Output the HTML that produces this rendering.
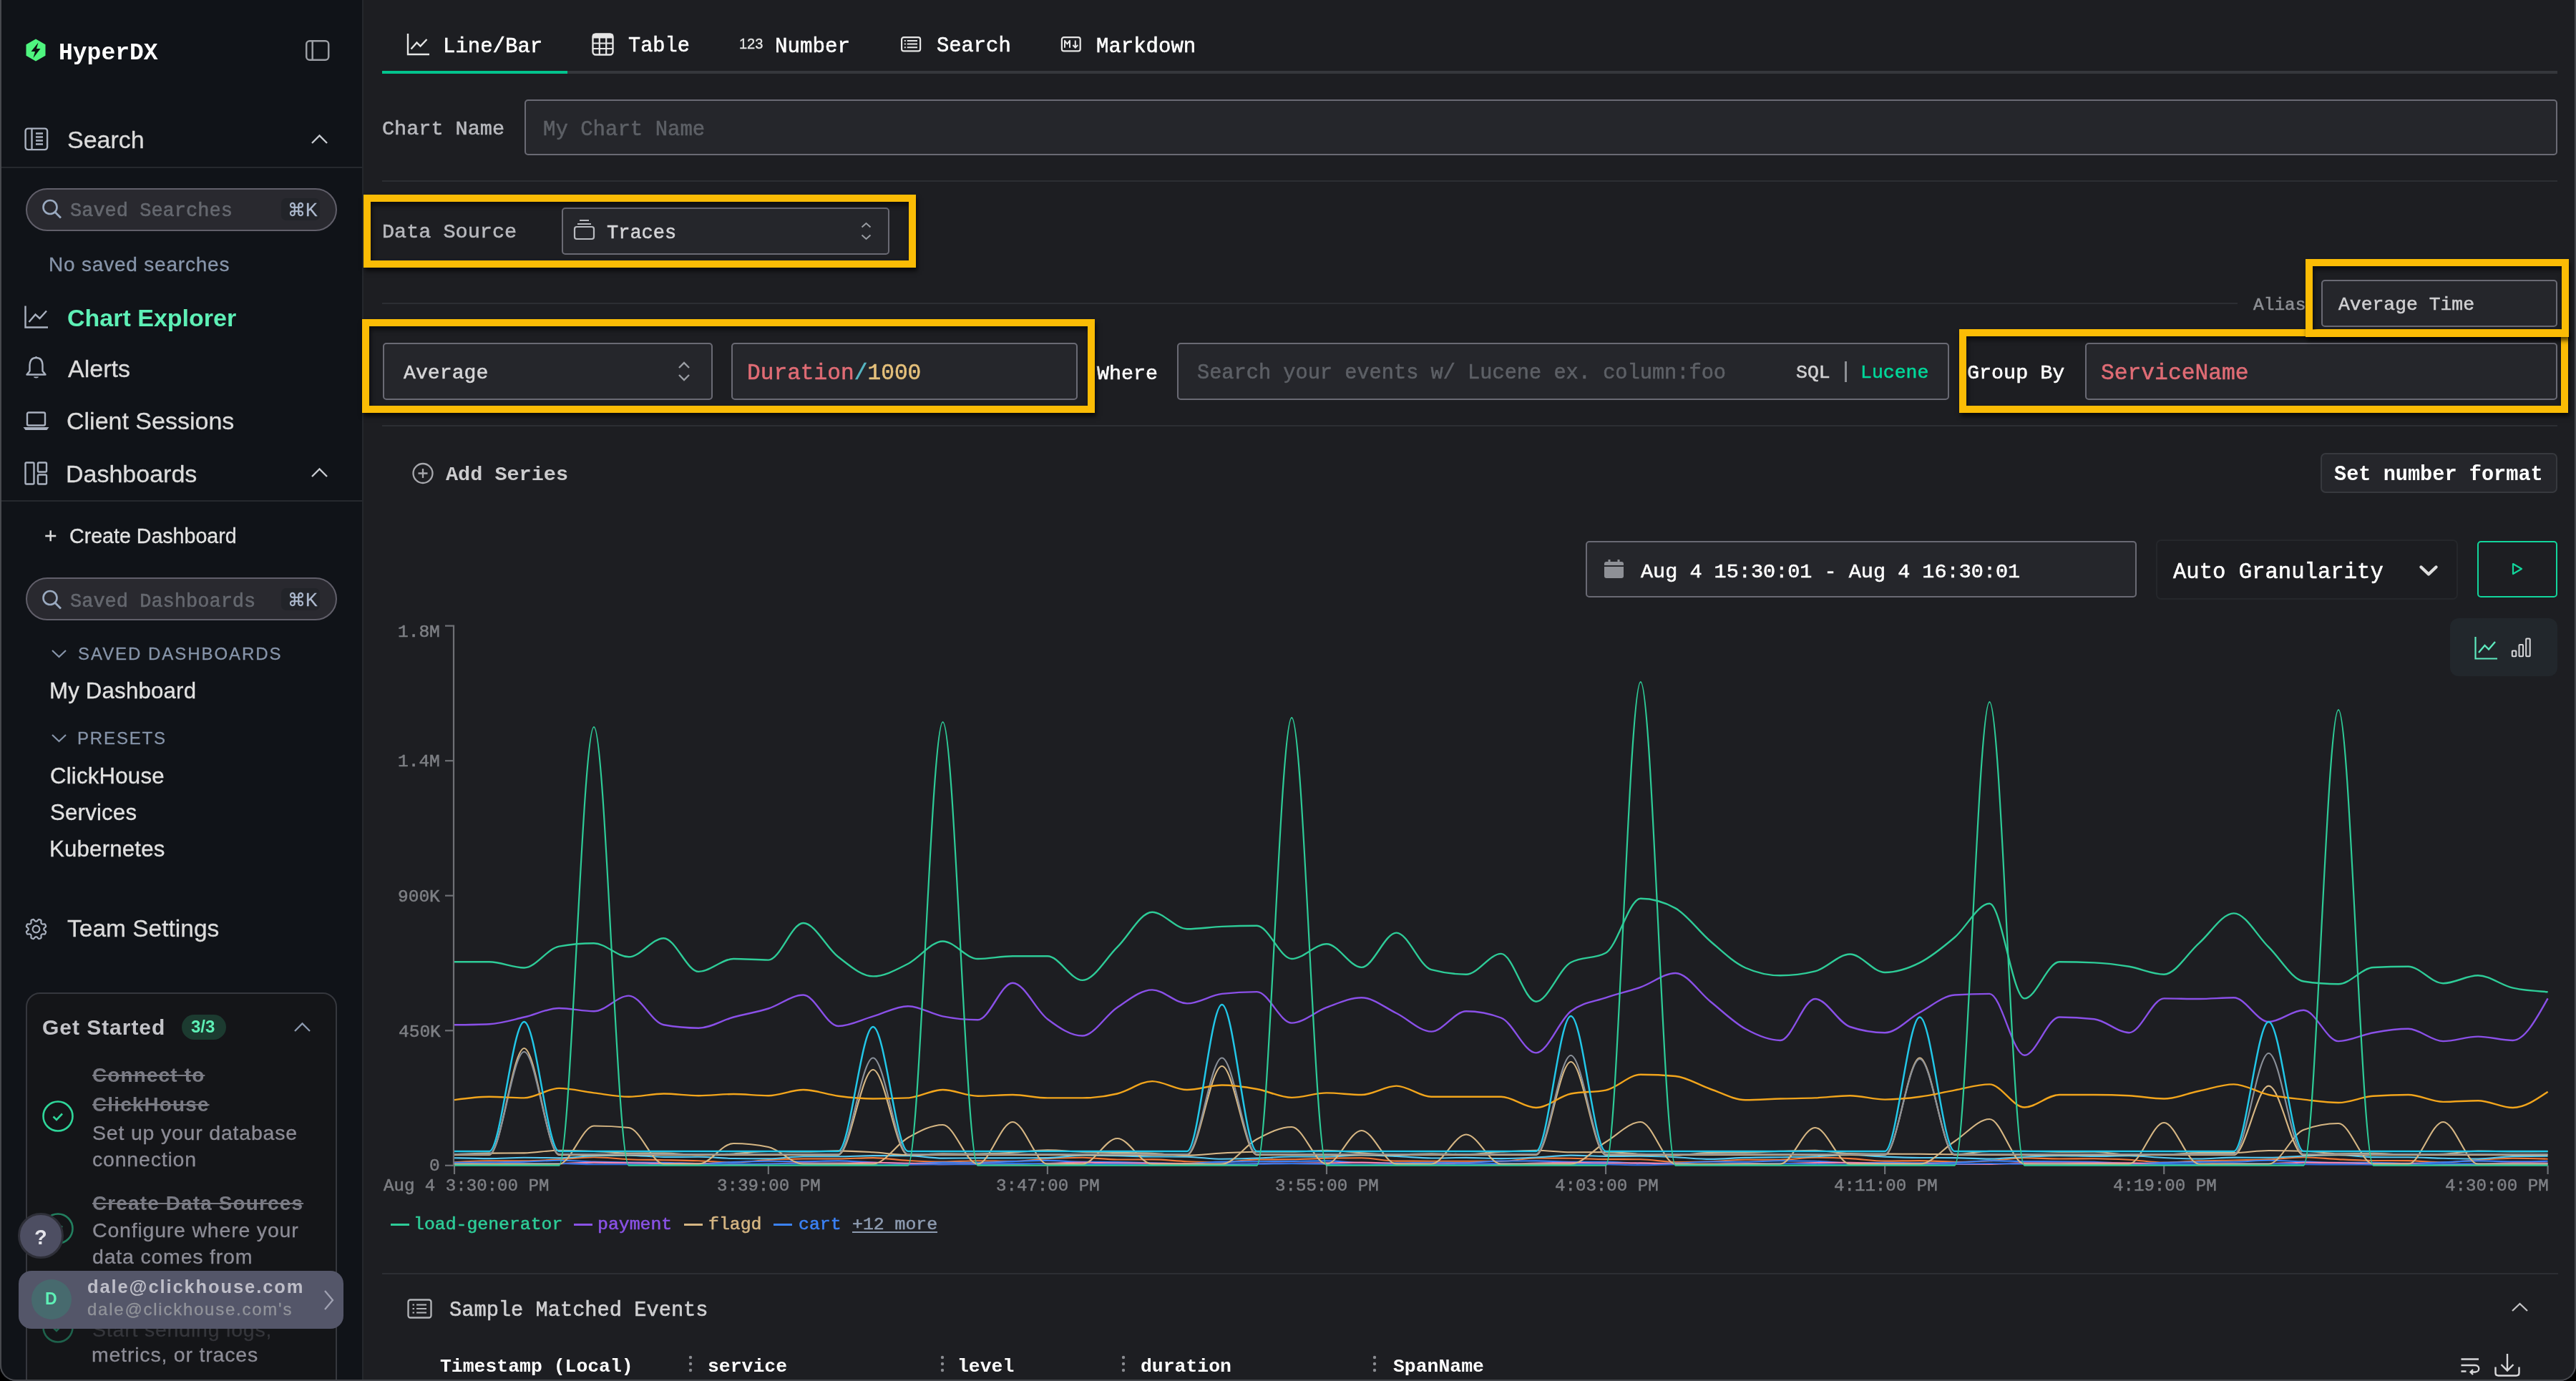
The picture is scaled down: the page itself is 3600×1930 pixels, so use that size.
<!DOCTYPE html><html><head><meta charset="utf-8"><style>
html,body{margin:0;padding:0;background:#000;}
body{width:3600px;height:1930px;position:relative;overflow:hidden;}
.t{position:absolute;white-space:pre;will-change:transform;}
.m{-webkit-text-stroke:0.55px currentColor;}
.s{-webkit-text-stroke:0.3px currentColor;}
.b{position:absolute;box-sizing:border-box;}
#win{position:absolute;left:0;top:0;width:3600px;height:1930px;border-radius:0 0 22px 22px;overflow:hidden;background:#1d1e22;}
</style></head><body><div id="win">
<div class="b" style="left:0px;top:0px;width:507px;height:1930px;background:#101318;"></div>
<div class="b" style="left:506px;top:0px;width:2px;height:1930px;background:#24272c;"></div>
<svg class="b" style="left:34px;top:53px;" width="32" height="34" viewBox="0 0 32 34" fill="none"><path d="M16 1.5 L29.5 9.3 L29.5 24.7 L16 32.5 L2.5 24.7 L2.5 9.3 Z" fill="#4ff57f"/><path d="M19.5 6.5 L9.5 19 L15 19 L12.5 28 L22.5 15 L17 15 Z" fill="#0d1012"/></svg>
<div class="t" style="left:81.8px;top:57.7px;font:700 33px/33px 'Liberation Mono', monospace;color:#ffffff;">HyperDX</div>
<svg class="b" style="left:425px;top:54px;" width="38" height="34" viewBox="0 0 38 34" fill="none"><rect x="3.2" y="3.2" width="31" height="26.5" rx="4.5" stroke="#9b9ea4" stroke-width="2.5"/><line x1="11.7" y1="3.5" x2="11.7" y2="29.5" stroke="#9b9ea4" stroke-width="2.5"/></svg>
<svg class="b" style="left:33px;top:177px;" width="36" height="35" viewBox="0 0 36 35" fill="none"><rect x="2.6" y="2.6" width="30.5" height="29.5" rx="3.5" stroke="#a9b1bf" stroke-width="2.4"/><line x1="11.5" y1="3" x2="11.5" y2="32" stroke="#a9b1bf" stroke-width="2.4"/><path d="M17 9.5h10M17 14.5h10M17 19.5h10M17 24.5h10" stroke="#a9b1bf" stroke-width="2.4"/></svg>
<div class="t s" style="left:94.0px;top:178.2px;font:400 34px/34px 'Liberation Sans', sans-serif;color:#dcdcdc;">Search</div>
<svg class="b" style="left:433px;top:185px;" width="27" height="19" viewBox="0 0 27 19" fill="none"><path d="M3 15 L13.5 4.5 L24 15" stroke="#c9ccd2" stroke-width="2.4"/></svg>
<div class="b" style="left:2px;top:233px;width:504px;height:2px;background:#26292e;"></div>
<div class="b" style="left:36px;top:263px;width:435px;height:60px;background:#29292f;border:2px solid #615f6a;border-radius:30px;"></div>
<svg class="b" style="left:56.5px;top:277px;" width="33.0" height="30" viewBox="0 0 33.0 30" fill="none"><circle cx="13" cy="12.5" r="9.5" stroke="#9aaac0" stroke-width="2.6"/><path d="M20 19.5 L28 27.5" stroke="#9aaac0" stroke-width="2.8"/></svg>
<div class="t m" style="left:98.0px;top:281.8px;font:400 27px/27px 'Liberation Mono', monospace;color:#65686f;">Saved Searches</div>
<div class="b" style="left:393px;top:277px;width:54px;height:31px;background:#222429;border-radius:7px;"></div>
<div class="t s" style="left:402.0px;top:280.8px;font:400 25px/25px 'Liberation Sans', sans-serif;color:#aebbd0;">⌘K</div>
<div class="t s" style="left:68.1px;top:356.3px;font:400 28px/28px 'Liberation Sans', sans-serif;color:#8795aa;letter-spacing:0.8px;">No saved searches</div>
<svg class="b" style="left:32px;top:425px;" width="37" height="36" viewBox="0 0 37 36" fill="none"><path d="M3.5 2.5 V32.5 H35" stroke="#a9b1bf" stroke-width="2.4"/><path d="M8.5 25 L17.5 14.5 L23.5 20 L33 9.5" stroke="#a9b1bf" stroke-width="2.4"/></svg>
<div class="t" style="left:93.8px;top:426.9px;font:700 34px/34px 'Liberation Sans', sans-serif;color:#5ef0b6;">Chart Explorer</div>
<svg class="b" style="left:34px;top:496px;" width="33" height="37" viewBox="0 0 33 37" fill="none"><path d="M16.5 4 C9 4 7.5 10 7.5 15 V22.5 L3.5 27.5 H29.5 L25.5 22.5 V15 C25.5 10 24 4 16.5 4 Z" stroke="#a9b1bf" stroke-width="2.4" stroke-linejoin="round"/><path d="M13 30.5 H20 C20 33 13 33 13 30.5Z" fill="#a9b1bf"/><circle cx="16.5" cy="3.5" r="1.5" fill="#a9b1bf"/></svg>
<div class="t s" style="left:94.9px;top:498.2px;font:400 34px/34px 'Liberation Sans', sans-serif;color:#dcdcdc;">Alerts</div>
<svg class="b" style="left:32px;top:573px;" width="37" height="29" viewBox="0 0 37 29" fill="none"><rect x="6" y="3.5" width="25" height="18" rx="2" stroke="#a9b1bf" stroke-width="2.4"/><path d="M2.5 25 H34.5 L33 27 H4 Z" fill="#a9b1bf" stroke="#a9b1bf" stroke-width="2"/></svg>
<div class="t s" style="left:93.3px;top:571.2px;font:400 34px/34px 'Liberation Sans', sans-serif;color:#dcdcdc;">Client Sessions</div>
<svg class="b" style="left:32px;top:643px;" width="37" height="37" viewBox="0 0 37 37" fill="none"><rect x="3.5" y="3.5" width="12" height="30" rx="1.5" stroke="#a9b1bf" stroke-width="2.4"/><rect x="21" y="3.5" width="12" height="13" rx="1.5" stroke="#a9b1bf" stroke-width="2.4"/><rect x="21" y="20.5" width="12" height="13" rx="1.5" stroke="#a9b1bf" stroke-width="2.4"/></svg>
<div class="t s" style="left:92.2px;top:645.2px;font:400 34px/34px 'Liberation Sans', sans-serif;color:#dcdcdc;">Dashboards</div>
<svg class="b" style="left:433px;top:651px;" width="27" height="19" viewBox="0 0 27 19" fill="none"><path d="M3 15 L13.5 4.5 L24 15" stroke="#c9ccd2" stroke-width="2.4"/></svg>
<div class="b" style="left:2px;top:699px;width:504px;height:2px;background:#26292e;"></div>
<div class="t s" style="left:61.5px;top:734.0px;font:400 30px/30px 'Liberation Sans', sans-serif;color:#dcdcdc;">+</div>
<div class="t s" style="left:97.0px;top:735.2px;font:400 28.6px/28.6px 'Liberation Sans', sans-serif;color:#e2e2e2;">Create Dashboard</div>
<div class="b" style="left:36px;top:807px;width:435px;height:60px;background:#29292f;border:2px solid #615f6a;border-radius:30px;"></div>
<svg class="b" style="left:56.5px;top:822.5px;" width="33.0" height="30.0" viewBox="0 0 33.0 30.0" fill="none"><circle cx="13" cy="12.5" r="9.5" stroke="#9aaac0" stroke-width="2.6"/><path d="M20 19.5 L28 27.5" stroke="#9aaac0" stroke-width="2.8"/></svg>
<div class="t m" style="left:98.0px;top:828.3px;font:400 27px/27px 'Liberation Mono', monospace;color:#65686f;">Saved Dashboards</div>
<div class="b" style="left:393px;top:822px;width:54px;height:31px;background:#222429;border-radius:7px;"></div>
<div class="t s" style="left:402.0px;top:826.3px;font:400 25px/25px 'Liberation Sans', sans-serif;color:#aebbd0;">⌘K</div>
<svg class="b" style="left:70px;top:904px;" width="25" height="18" viewBox="0 0 25 18" fill="none"><path d="M3 5 L12.5 14 L22 5" stroke="#8795aa" stroke-width="2.2"/></svg>
<div class="t s" style="left:108.9px;top:901.7px;font:400 24px/24px 'Liberation Sans', sans-serif;color:#8795aa;letter-spacing:1.95px;">SAVED DASHBOARDS</div>
<div class="t s" style="left:68.8px;top:949.6px;font:400 31.2px/31.2px 'Liberation Sans', sans-serif;color:#e2e2e2;letter-spacing:0.2px;">My Dashboard</div>
<svg class="b" style="left:70px;top:1022px;" width="25" height="18" viewBox="0 0 25 18" fill="none"><path d="M3 5 L12.5 14 L22 5" stroke="#8795aa" stroke-width="2.2"/></svg>
<div class="t s" style="left:108.0px;top:1019.7px;font:400 24px/24px 'Liberation Sans', sans-serif;color:#8795aa;letter-spacing:1.85px;">PRESETS</div>
<div class="t s" style="left:69.8px;top:1068.6px;font:400 31.2px/31.2px 'Liberation Sans', sans-serif;color:#e2e2e2;letter-spacing:0.2px;">ClickHouse</div>
<div class="t s" style="left:70.0px;top:1120.0px;font:400 31.2px/31.2px 'Liberation Sans', sans-serif;color:#e2e2e2;letter-spacing:0.2px;">Services</div>
<div class="t s" style="left:68.8px;top:1171.2px;font:400 31.2px/31.2px 'Liberation Sans', sans-serif;color:#e2e2e2;letter-spacing:0.2px;">Kubernetes</div>
<svg class="b" style="left:33px;top:1281px;" width="35" height="35" viewBox="0 0 35 35" fill="none"><g transform="translate(17.5 17.5) rotate(22.5)" stroke="#a9b1bf" stroke-width="2.2" stroke-linejoin="round"><path d="M0.00 -14.20L0.56 -14.19L1.11 -14.16L1.67 -14.10L2.12 -13.39L2.46 -12.35L2.75 -11.47L3.05 -10.81L3.38 -10.39L3.74 -10.15L4.13 -9.98L4.53 -9.82L4.96 -9.74L5.49 -9.80L6.16 -10.06L7.00 -10.47L7.97 -10.97L8.79 -11.15L9.22 -10.80L9.64 -10.43L10.04 -10.04L10.43 -9.64L10.80 -9.22L11.15 -8.79L10.97 -7.97L10.47 -7.00L10.06 -6.16L9.80 -5.49L9.74 -4.96L9.82 -4.53L9.98 -4.13L10.15 -3.74L10.39 -3.38L10.81 -3.05L11.47 -2.75L12.35 -2.46L13.39 -2.12L14.10 -1.67L14.16 -1.11L14.19 -0.56L14.20 0.00L14.19 0.56L14.16 1.11L14.10 1.67L13.39 2.12L12.35 2.46L11.47 2.75L10.81 3.05L10.39 3.38L10.15 3.74L9.98 4.13L9.82 4.53L9.74 4.96L9.80 5.49L10.06 6.16L10.47 7.00L10.97 7.97L11.15 8.79L10.80 9.22L10.43 9.64L10.04 10.04L9.64 10.43L9.22 10.80L8.79 11.15L7.97 10.97L7.00 10.47L6.16 10.06L5.49 9.80L4.96 9.74L4.53 9.82L4.13 9.98L3.74 10.15L3.38 10.39L3.05 10.81L2.75 11.47L2.46 12.35L2.12 13.39L1.67 14.10L1.11 14.16L0.56 14.19L0.00 14.20L-0.56 14.19L-1.11 14.16L-1.67 14.10L-2.12 13.39L-2.46 12.35L-2.75 11.47L-3.05 10.81L-3.38 10.39L-3.74 10.15L-4.13 9.98L-4.53 9.82L-4.96 9.74L-5.49 9.80L-6.16 10.06L-7.00 10.47L-7.97 10.97L-8.79 11.15L-9.22 10.80L-9.64 10.43L-10.04 10.04L-10.43 9.64L-10.80 9.22L-11.15 8.79L-10.97 7.97L-10.47 7.00L-10.06 6.16L-9.80 5.49L-9.74 4.96L-9.82 4.53L-9.98 4.13L-10.15 3.74L-10.39 3.38L-10.81 3.05L-11.47 2.75L-12.35 2.46L-13.39 2.12L-14.10 1.67L-14.16 1.11L-14.19 0.56L-14.20 0.00L-14.19 -0.56L-14.16 -1.11L-14.10 -1.67L-13.39 -2.12L-12.35 -2.46L-11.47 -2.75L-10.81 -3.05L-10.39 -3.38L-10.15 -3.74L-9.98 -4.13L-9.82 -4.53L-9.74 -4.96L-9.80 -5.49L-10.06 -6.16L-10.47 -7.00L-10.97 -7.97L-11.15 -8.79L-10.80 -9.22L-10.43 -9.64L-10.04 -10.04L-9.64 -10.43L-9.22 -10.80L-8.79 -11.15L-7.97 -10.97L-7.00 -10.47L-6.16 -10.06L-5.49 -9.80L-4.96 -9.74L-4.53 -9.82L-4.13 -9.98L-3.74 -10.15L-3.38 -10.39L-3.05 -10.81L-2.75 -11.47L-2.46 -12.35L-2.12 -13.39L-1.67 -14.10L-1.11 -14.16L-0.56 -14.19L-0.00 -14.20Z"/><circle r="4.8"/></g></svg>
<div class="t s" style="left:94.2px;top:1281.2px;font:400 33.5px/33.5px 'Liberation Sans', sans-serif;color:#dcdcdc;">Team Settings</div>
<div class="b" style="left:36px;top:1387px;width:435px;height:603px;background:#141518;border:2px solid #35373d;border-radius:20px;"></div>
<div class="t" style="left:58.8px;top:1421.3px;font:700 30px/30px 'Liberation Sans', sans-serif;color:#c3c3c8;letter-spacing:0.96px;">Get Started</div>
<div class="b" style="left:254px;top:1418px;width:62px;height:35px;background:#1c3b30;border-radius:18px;"></div>
<div class="t" style="left:267.4px;top:1422.7px;font:700 24px/24px 'Liberation Sans', sans-serif;color:#5ef0b6;">3/3</div>
<svg class="b" style="left:409px;top:1425.5px;" width="27" height="20.0" viewBox="0 0 27 20.0" fill="none"><path d="M3 15 L13.5 4.5 L24 15" stroke="#8d9bb0" stroke-width="2.3"/></svg>
<svg class="b" style="left:57px;top:1536px;" width="48" height="48" viewBox="0 0 48 48" fill="none"><g opacity="1"><circle cx="24" cy="24" r="20.5" stroke="#2fd69a" stroke-width="2.6"/><path d="M17.5 24.5 L22 29 L30 20.5" stroke="#2fd69a" stroke-width="2.6"/></g></svg>
<div class="t" style="left:128.9px;top:1489.1px;font:700 27.9px/27.9px 'Liberation Sans', sans-serif;color:#7a7b84;letter-spacing:1.17px;text-decoration:line-through;">Connect to</div>
<div class="t" style="left:128.9px;top:1530.4px;font:700 27.9px/27.9px 'Liberation Sans', sans-serif;color:#7a7b84;letter-spacing:1.17px;text-decoration:line-through;">ClickHouse</div>
<div class="t s" style="left:128.7px;top:1568.9px;font:400 28.5px/28.5px 'Liberation Sans', sans-serif;color:#8c8c96;letter-spacing:0.8px;">Set up your database</div>
<div class="t s" style="left:128.8px;top:1605.9px;font:400 28.5px/28.5px 'Liberation Sans', sans-serif;color:#8c8c96;letter-spacing:0.8px;">connection</div>
<svg class="b" style="left:57px;top:1693px;" width="48" height="48" viewBox="0 0 48 48" fill="none"><g opacity="0.55"><circle cx="24" cy="24" r="20.5" stroke="#2fd69a" stroke-width="2.6"/><path d="M17.5 24.5 L22 29 L30 20.5" stroke="#2fd69a" stroke-width="2.6"/></g></svg>
<div class="t" style="left:128.9px;top:1668.4px;font:700 27.9px/27.9px 'Liberation Sans', sans-serif;color:#7a7b84;letter-spacing:1.17px;text-decoration:line-through;">Create Data Sources</div>
<div class="t s" style="left:128.6px;top:1704.9px;font:400 28.5px/28.5px 'Liberation Sans', sans-serif;color:#8c8c96;letter-spacing:0.8px;">Configure where your</div>
<div class="t s" style="left:128.8px;top:1742.4px;font:400 28.5px/28.5px 'Liberation Sans', sans-serif;color:#8c8c96;letter-spacing:0.8px;">data comes from</div>
<svg class="b" style="left:57px;top:1831px;" width="48" height="48" viewBox="0 0 48 48" fill="none"><g opacity="0.4"><circle cx="24" cy="24" r="20.5" stroke="#2fd69a" stroke-width="2.6"/><path d="M17.5 24.5 L22 29 L30 20.5" stroke="#2fd69a" stroke-width="2.6"/></g></svg>
<div class="t s" style="left:128.7px;top:1843.9px;font:400 28.5px/28.5px 'Liberation Sans', sans-serif;color:#35363b;letter-spacing:0.8px;">Start sending logs,</div>
<div class="t s" style="left:128.1px;top:1878.6px;font:400 28.5px/28.5px 'Liberation Sans', sans-serif;color:#8c8c96;letter-spacing:0.8px;">metrics, or traces</div>
<div class="b" style="left:25px;top:1695px;width:64px;height:64px;background:#4d4e62;border:3px solid #2e2f38;border-radius:50%;"></div>
<div class="t" style="left:47.7px;top:1715.4px;font:700 29px/29px 'Liberation Sans', sans-serif;color:#e4e4ea;">?</div>
<div class="b" style="left:26px;top:1776px;width:454px;height:81px;background:#545669;border-radius:18px;"></div>
<div class="b" style="left:44px;top:1788px;width:56px;height:56px;background:#476a6e;border-radius:50%;"></div>
<div class="t" style="left:63.0px;top:1804.0px;font:700 23px/23px 'Liberation Sans', sans-serif;color:#5ef0b6;">D</div>
<div class="t" style="left:122.0px;top:1786.4px;font:700 25.5px/25.5px 'Liberation Sans', sans-serif;color:#bebec8;letter-spacing:1.9px;">dale@clickhouse.com</div>
<div class="t s" style="left:122.0px;top:1818.4px;font:400 24px/24px 'Liberation Sans', sans-serif;color:#91939a;letter-spacing:1.75px;">dale@clickhouse.com&#x27;s</div>
<svg class="b" style="left:448px;top:1800px;" width="24" height="34" viewBox="0 0 24 34" fill="none"><path d="M6 4 L17 17 L6 30" stroke="#a0a2b2" stroke-width="2.3"/></svg>
<svg class="b" style="left:567px;top:45px;" width="34" height="34" viewBox="0 0 34 34" fill="none"><path d="M3 2 V31 H33" stroke="#e6e6e6" stroke-width="2.4"/><path d="M7.5 23.5 L15.5 14.5 L20.5 19.5 L29.5 10" stroke="#e6e6e6" stroke-width="2.4"/></svg>
<div class="t m" style="left:619.2px;top:50.9px;font:400 29px/29px 'Liberation Mono', monospace;color:#ffffff;">Line/Bar</div>
<svg class="b" style="left:826px;top:45px;" width="33" height="34" viewBox="0 0 33 34" fill="none"><rect x="2.5" y="2.5" width="28" height="29" rx="4" stroke="#e6e6e6" stroke-width="2.4"/><rect x="2.5" y="2.5" width="28" height="6" fill="#e6e6e6"/><path d="M2.5 15.5 H30.5 M2.5 23 H30.5 M11.8 8 V31 M21.2 8 V31" stroke="#e6e6e6" stroke-width="2.2"/></svg>
<div class="t m" style="left:877.7px;top:51.2px;font:400 28.6px/28.6px 'Liberation Mono', monospace;color:#ffffff;">Table</div>
<div class="t s" style="left:1032.5px;top:51.1px;font:400 20px/20px 'Liberation Sans', sans-serif;color:#e6e6e6;">123</div>
<div class="t m" style="left:1083.1px;top:50.7px;font:400 29.2px/29.2px 'Liberation Mono', monospace;color:#ffffff;">Number</div>
<svg class="b" style="left:1256px;top:47px;" width="34" height="30" viewBox="0 0 34 30" fill="none"><rect x="4.1" y="5.1" width="26" height="19.3" rx="3" stroke="#e6e6e6" stroke-width="2.2"/><path d="M7.8 9.9h2M11.7 9.9h14.3M7.8 14.6h2M11.7 14.6h14.3M7.8 19.2h2M11.7 19.2h14.3" stroke="#e6e6e6" stroke-width="2"/></svg>
<div class="t m" style="left:1308.9px;top:51.0px;font:400 28.8px/28.8px 'Liberation Mono', monospace;color:#ffffff;">Search</div>
<svg class="b" style="left:1480px;top:47px;" width="34" height="30" viewBox="0 0 34 30" fill="none"><rect x="3.9" y="5.1" width="25.8" height="19.3" rx="3" stroke="#e6e6e6" stroke-width="2.2"/><path d="M8 19.7 V9.8 L11.5 14.5 L15 9.8 V19.7" stroke="#e6e6e6" stroke-width="2" stroke-linejoin="round"/><path d="M22.8 9.5 V19.5 M19.3 16 L22.8 19.5 L26.3 16" stroke="#e6e6e6" stroke-width="2"/></svg>
<div class="t m" style="left:1531.7px;top:50.9px;font:400 29px/29px 'Liberation Mono', monospace;color:#ffffff;">Markdown</div>
<div class="b" style="left:534px;top:99px;width:3040px;height:4px;background:#35373c;"></div>
<div class="b" style="left:534px;top:99px;width:259px;height:4px;background:#03c48e;"></div>
<div class="t m" style="left:534.4px;top:167.2px;font:400 28.5px/28.5px 'Liberation Mono', monospace;color:#b8b9be;">Chart Name</div>
<div class="b" style="left:733px;top:139px;width:2841px;height:78px;background:#25262b;border:2px solid #6a6a74;border-radius:5px;"></div>
<div class="t m" style="left:759.2px;top:166.8px;font:400 29px/29px 'Liberation Mono', monospace;color:#5d6066;">My Chart Name</div>
<div class="b" style="left:534px;top:252px;width:3040px;height:2px;background:#2c2e33;"></div>
<div class="t m" style="left:534.2px;top:311.4px;font:400 28.5px/28.5px 'Liberation Mono', monospace;color:#b8b9be;">Data Source</div>
<div class="b" style="left:785px;top:290px;width:458px;height:66px;background:#25262b;border:2px solid #6a6a74;border-radius:5px;"></div>
<svg class="b" style="left:799px;top:303px;" width="34" height="37" viewBox="0 0 34 37" fill="none"><path d="M11 5 H24 M8 10 H27" stroke="#b9bbc0" stroke-width="2"/><rect x="4" y="14" width="27" height="17" rx="3" stroke="#b9bbc0" stroke-width="2.2"/></svg>
<div class="t m" style="left:848.0px;top:312.8px;font:400 27px/27px 'Liberation Mono', monospace;color:#d4d4d7;">Traces</div>
<svg class="b" style="left:1198px;top:308px;" width="26" height="32" viewBox="0 0 26 32" fill="none"><path d="M6.5 9.5 L12.5 4 L18.5 9.5 M6.5 20.5 L12.5 26 L18.5 20.5" stroke="#9a9da3" stroke-width="2"/></svg>
<div class="b" style="left:534px;top:423px;width:2593px;height:2px;background:#2c2e33;"></div>
<div class="t m" style="left:3149.4px;top:414.7px;font:400 24.5px/24.5px 'Liberation Mono', monospace;color:#8d8f94;">Alias</div>
<div class="b" style="left:3244px;top:391px;width:330px;height:66px;background:#25262b;border:2px solid #6a6a74;border-radius:5px;"></div>
<div class="t m" style="left:3268.0px;top:413.3px;font:400 26.4px/26.4px 'Liberation Mono', monospace;color:#cfcfd1;">Average Time</div>
<div class="b" style="left:535px;top:479px;width:461px;height:80px;background:#25262b;border:2px solid #6a6a74;border-radius:5px;"></div>
<div class="t m" style="left:564.0px;top:508.4px;font:400 28.2px/28.2px 'Liberation Mono', monospace;color:#d6d6d8;">Average</div>
<svg class="b" style="left:940px;top:500px;" width="32" height="38" viewBox="0 0 32 38" fill="none"><path d="M9 14 L16 7 L23 14 M9 24 L16 31 L23 24" stroke="#9a9da3" stroke-width="2.4"/></svg>
<div class="b" style="left:1022px;top:479px;width:484px;height:80px;background:#25262b;border:2px solid #6a6a74;border-radius:5px;"></div>
<div class="t m" style="left:1043.5px;top:506.1px;font:400 31.2px/31.2px 'Liberation Mono', monospace;color:#e06c75;">Duration<span style="color:#56b6c2">/</span><span style="color:#e5c07b">1000</span></div>
<div class="t m" style="left:1532.8px;top:508.3px;font:400 28.3px/28.3px 'Liberation Mono', monospace;color:#ffffff;">Where</div>
<div class="b" style="left:1645px;top:479px;width:1079px;height:80px;background:#25262b;border:2px solid #6a6a74;border-radius:5px;"></div>
<div class="t m" style="left:1672.5px;top:508.1px;font:400 28.65px/28.65px 'Liberation Mono', monospace;color:#5d6066;">Search your events w/ Lucene ex. column:foo</div>
<div class="t m" style="left:2510.0px;top:508.2px;font:400 26.5px/26.5px 'Liberation Mono', monospace;color:#d0d0d2;">SQL</div>
<div class="b" style="left:2578px;top:505px;width:2.5px;height:29px;background:#8d8f94;"></div>
<div class="t m" style="left:2599.7px;top:508.2px;font:400 26.5px/26.5px 'Liberation Mono', monospace;color:#00d89a;">Lucene</div>
<div class="t m" style="left:2749.1px;top:508.2px;font:400 28.4px/28.4px 'Liberation Mono', monospace;color:#ffffff;">Group By</div>
<div class="b" style="left:2914px;top:479px;width:660px;height:80px;background:#25262b;border:2px solid #6a6a74;border-radius:5px;"></div>
<div class="t m" style="left:2936.4px;top:506.0px;font:400 31.3px/31.3px 'Liberation Mono', monospace;color:#e06c75;">ServiceName</div>
<div class="b" style="left:534px;top:594px;width:3040px;height:2px;background:#2c2e33;"></div>
<svg class="b" style="left:574px;top:645px;" width="34" height="33" viewBox="0 0 34 33" fill="none"><circle cx="17" cy="16.5" r="13.5" stroke="#a7a8ad" stroke-width="2.3"/><path d="M17 10 V23 M10.5 16.5 H23.5" stroke="#a7a8ad" stroke-width="2.3"/></svg>
<div class="t" style="left:622.5px;top:649.7px;font:700 28.5px/28.5px 'Liberation Mono', monospace;color:#cbcbcd;">Add Series</div>
<div class="b" style="left:3243px;top:633px;width:331px;height:56px;background:#25262b;border:2px solid #37393e;border-radius:7px;"></div>
<div class="t" style="left:3262.2px;top:649.6px;font:700 28.6px/28.6px 'Liberation Mono', monospace;color:#ffffff;">Set number format</div>
<div class="b" style="left:2216px;top:756px;width:770px;height:79px;background:#25262b;border:2px solid #6a6a74;border-radius:5px;"></div>
<svg class="b" style="left:2238px;top:779px;" width="35" height="32" viewBox="0 0 35 32" fill="none"><rect x="4" y="6" width="27" height="23" rx="3" fill="#8e9096"/><path d="M11 3 V8 M24 3 V8" stroke="#8e9096" stroke-width="3"/><rect x="4" y="11" width="27" height="2" fill="#25262b"/></svg>
<div class="t m" style="left:2293.0px;top:786.2px;font:400 28.5px/28.5px 'Liberation Mono', monospace;color:#ffffff;">Aug 4 15:30:01 - Aug 4 16:30:01</div>
<div class="b" style="left:3013px;top:754px;width:422px;height:84px;background:#1c1d21;border:2px solid #25272b;border-radius:7px;"></div>
<div class="t m" style="left:3037.0px;top:784.6px;font:400 30.6px/30.6px 'Liberation Mono', monospace;color:#ffffff;">Auto Granularity</div>
<svg class="b" style="left:3376px;top:784px;" width="36" height="28" viewBox="0 0 36 28" fill="none"><path d="M7.5 8.5 L18 18.5 L28.5 8.5" stroke="#dedede" stroke-width="4.4" stroke-linecap="round" stroke-linejoin="round"/></svg>
<div class="b" style="left:3462px;top:756px;width:112px;height:79px;border:2.5px solid #12d69c;border-radius:5px;"></div>
<svg class="b" style="left:3504px;top:780px;" width="30" height="32" viewBox="0 0 30 32" fill="none"><path d="M8 8 L20 15 L8 22 Z" stroke="#12d69c" stroke-width="2.2" stroke-linejoin="round"/></svg>
<div class="b" style="left:3424px;top:864px;width:150px;height:81px;background:#22272c;border-radius:12px;"></div>
<svg class="b" style="left:3456px;top:888px;" width="38" height="36" viewBox="0 0 38 36" fill="none"><path d="M3.5 2 V32.5 H34" stroke="#5eeabf" stroke-width="2.2"/><path d="M8 24 L16.5 14 L22 19.5 L31 9" stroke="#5eeabf" stroke-width="2.4"/></svg>
<svg class="b" style="left:3505px;top:889px;" width="36" height="33" viewBox="0 0 36 33" fill="none"><rect x="5.8" y="20.5" width="5.5" height="7.8" rx="1" stroke="#d8d8da" stroke-width="2"/><rect x="15.5" y="12" width="5.5" height="16.3" rx="1" stroke="#d8d8da" stroke-width="2"/><rect x="25.2" y="3.5" width="5.5" height="24.8" rx="1" stroke="#d8d8da" stroke-width="2"/></svg>
<svg class="b" style="left:0;top:0" width="3600" height="1930" viewBox="0 0 3600 1930"><path d="M634.0,1628.7 V874.6 H622" stroke="#6e7075" stroke-width="2.2" fill="none"/><path d="M622,1063.2 H634.0" stroke="#6e7075" stroke-width="2.2"/><path d="M622,1251.7 H634.0" stroke="#6e7075" stroke-width="2.2"/><path d="M622,1440.3 H634.0" stroke="#6e7075" stroke-width="2.2"/><path d="M622,1628.8 H634.0" stroke="#6e7075" stroke-width="2.2"/><path d="M635.0,1628.7 V1641" stroke="#6e7075" stroke-width="2.2"/><path d="M1073.84,1628.7 V1641" stroke="#6e7075" stroke-width="2.2"/><path d="M1463.92,1628.7 V1641" stroke="#6e7075" stroke-width="2.2"/><path d="M1854.0,1628.7 V1641" stroke="#6e7075" stroke-width="2.2"/><path d="M2244.08,1628.7 V1641" stroke="#6e7075" stroke-width="2.2"/><path d="M2634.16,1628.7 V1641" stroke="#6e7075" stroke-width="2.2"/><path d="M3024.24,1628.7 V1641" stroke="#6e7075" stroke-width="2.2"/><path d="M3560.6,1628.7 V1641" stroke="#6e7075" stroke-width="2.2"/><path d="M635.0,1624.2C651.3,1623.2 667.5,1622.2 683.8,1622.2C700.0,1622.2 716.3,1622.2 732.5,1622.2C748.8,1622.2 765.0,1621.1 781.3,1620.3C797.5,1619.5 813.8,1617.3 830.0,1617.3C846.3,1617.3 862.5,1619.6 878.8,1620.2C895.1,1620.9 911.3,1620.8 927.6,1621.2C943.8,1621.5 960.1,1621.7 976.3,1622.3C992.6,1622.8 1008.8,1624.6 1025.1,1624.6C1041.3,1624.6 1057.6,1621.8 1073.8,1621.0C1090.1,1620.1 1106.3,1619.5 1122.6,1619.5C1138.9,1619.5 1155.1,1619.5 1171.4,1619.5C1187.6,1619.5 1203.9,1618.1 1220.1,1618.1C1236.4,1618.1 1252.6,1621.0 1268.9,1621.9C1285.1,1622.8 1301.4,1623.6 1317.6,1623.6C1333.9,1623.6 1350.1,1622.2 1366.4,1622.2C1382.7,1622.2 1398.9,1622.9 1415.2,1622.9C1431.4,1622.9 1447.7,1620.1 1463.9,1619.3C1480.2,1618.4 1496.4,1617.8 1512.7,1617.8C1528.9,1617.8 1545.2,1620.5 1561.4,1620.5C1577.7,1620.5 1593.9,1620.4 1610.2,1620.4C1626.5,1620.4 1642.7,1622.6 1659.0,1623.2C1675.2,1623.8 1691.5,1624.2 1707.7,1624.2C1724.0,1624.2 1740.2,1620.6 1756.5,1620.5C1772.7,1620.4 1789.0,1620.4 1805.2,1620.3C1821.5,1620.2 1837.7,1619.1 1854.0,1618.7C1870.3,1618.4 1886.5,1618.3 1902.8,1618.3C1919.0,1618.3 1935.3,1622.6 1951.5,1622.6C1967.8,1622.7 1984.0,1622.6 2000.3,1622.7C2016.5,1622.7 2032.8,1622.8 2049.0,1622.8C2065.3,1622.8 2081.5,1622.9 2097.8,1622.9C2114.1,1622.9 2130.3,1618.5 2146.6,1618.5C2162.8,1618.5 2179.1,1618.6 2195.3,1618.8C2211.6,1619.0 2227.8,1620.0 2244.1,1620.1C2260.3,1620.2 2276.6,1620.1 2292.8,1620.2C2309.1,1620.3 2325.3,1624.1 2341.6,1624.1C2357.9,1624.1 2374.1,1623.9 2390.4,1623.3C2406.6,1622.8 2422.9,1620.7 2439.1,1620.7C2455.4,1620.7 2471.6,1620.7 2487.9,1620.7C2504.1,1620.7 2520.4,1617.8 2536.6,1617.8C2552.9,1617.8 2569.1,1618.3 2585.4,1619.1C2601.7,1619.9 2617.9,1622.6 2634.2,1622.6C2650.4,1622.6 2666.7,1622.1 2682.9,1622.1C2699.2,1622.1 2715.4,1623.7 2731.7,1623.7C2747.9,1623.7 2764.2,1623.1 2780.4,1622.2C2796.7,1621.3 2812.9,1618.3 2829.2,1618.3C2845.5,1618.3 2861.7,1619.5 2878.0,1619.5C2894.2,1619.5 2910.5,1619.2 2926.7,1619.2C2943.0,1619.2 2959.2,1619.9 2975.5,1620.7C2991.7,1621.6 3008.0,1624.5 3024.2,1624.5C3040.5,1624.5 3056.7,1622.9 3073.0,1622.4C3089.3,1621.9 3105.5,1621.8 3121.8,1621.5C3138.0,1621.1 3154.3,1621.1 3170.5,1620.4C3186.8,1619.7 3203.0,1617.3 3219.3,1617.3C3235.5,1617.3 3251.8,1619.3 3268.0,1620.1C3284.3,1620.9 3300.5,1621.8 3316.8,1622.0C3333.1,1622.1 3349.3,1622.0 3365.6,1622.1C3381.8,1622.2 3398.1,1624.4 3414.3,1624.4C3430.6,1624.4 3446.8,1622.1 3463.1,1621.1C3479.3,1620.2 3495.6,1618.8 3511.8,1618.8C3528.1,1618.8 3544.3,1619.2 3560.6,1619.7" stroke="#f07a3a" stroke-width="2.1" fill="none"/><path d="M635.0,1624.8C651.3,1624.7 667.5,1624.6 683.8,1624.4C700.0,1624.2 716.3,1624.1 732.5,1623.6C748.8,1623.2 765.0,1621.8 781.3,1621.8C797.5,1621.8 813.8,1623.0 830.0,1623.5C846.3,1624.0 862.5,1624.3 878.8,1624.5C895.1,1624.6 911.3,1624.6 927.6,1624.7C943.8,1624.8 960.1,1626.1 976.3,1626.1C992.6,1626.1 1008.8,1624.6 1025.1,1624.0C1041.3,1623.5 1057.6,1622.7 1073.8,1622.7C1090.1,1622.7 1106.3,1623.2 1122.6,1623.2C1138.9,1623.2 1155.1,1622.4 1171.4,1622.4C1187.6,1622.4 1203.9,1623.9 1220.1,1624.5C1236.4,1625.0 1252.6,1625.8 1268.9,1625.8C1285.1,1625.8 1301.4,1624.6 1317.6,1624.6C1333.9,1624.6 1350.1,1624.8 1366.4,1624.8C1382.7,1624.8 1398.9,1623.6 1415.2,1623.1C1431.4,1622.6 1447.7,1621.9 1463.9,1621.9C1480.2,1621.9 1496.4,1623.7 1512.7,1623.8C1528.9,1623.9 1545.2,1623.9 1561.4,1624.0C1577.7,1624.0 1593.9,1624.8 1610.2,1625.2C1626.5,1625.5 1642.7,1626.0 1659.0,1626.0C1675.2,1626.0 1691.5,1623.8 1707.7,1623.6C1724.0,1623.4 1740.2,1623.4 1756.5,1623.3C1772.7,1623.2 1789.0,1623.0 1805.2,1622.9C1821.5,1622.7 1837.7,1622.4 1854.0,1622.4C1870.3,1622.4 1886.5,1624.8 1902.8,1625.0C1919.0,1625.2 1935.3,1625.3 1951.5,1625.3C1967.8,1625.3 1984.0,1624.8 2000.3,1624.8C2016.5,1624.8 2032.8,1625.0 2049.0,1625.0C2065.3,1625.0 2081.5,1622.5 2097.8,1622.5C2114.1,1622.5 2130.3,1622.4 2146.6,1622.4C2162.8,1622.4 2179.1,1623.7 2195.3,1623.7C2211.6,1623.7 2227.8,1623.7 2244.1,1623.7C2260.3,1623.7 2276.6,1625.8 2292.8,1625.8C2309.1,1625.8 2325.3,1625.7 2341.6,1625.5C2357.9,1625.4 2374.1,1623.5 2390.4,1623.5C2406.6,1623.5 2422.9,1623.7 2439.1,1623.7C2455.4,1623.7 2471.6,1622.3 2487.9,1622.3C2504.1,1622.3 2520.4,1622.4 2536.6,1622.8C2552.9,1623.1 2569.1,1625.2 2585.4,1625.2C2601.7,1625.2 2617.9,1624.8 2634.2,1624.8C2650.4,1624.8 2666.7,1625.3 2682.9,1625.3C2699.2,1625.3 2715.4,1625.1 2731.7,1624.7C2747.9,1624.3 2764.2,1622.2 2780.4,1622.2C2796.7,1622.2 2812.9,1622.8 2829.2,1623.0C2845.5,1623.2 2861.7,1623.1 2878.0,1623.3C2894.2,1623.4 2910.5,1623.5 2926.7,1623.8C2943.0,1624.2 2959.2,1626.1 2975.5,1626.1C2991.7,1626.1 3008.0,1625.3 3024.2,1624.9C3040.5,1624.6 3056.7,1624.1 3073.0,1623.9C3089.3,1623.7 3105.5,1623.8 3121.8,1623.7C3138.0,1623.5 3154.3,1621.8 3170.5,1621.8C3186.8,1621.8 3203.0,1622.9 3219.3,1623.4C3235.5,1623.9 3251.8,1624.9 3268.0,1624.9C3284.3,1624.9 3300.5,1624.7 3316.8,1624.7C3333.1,1624.7 3349.3,1625.8 3365.6,1625.8C3381.8,1625.8 3398.1,1624.7 3414.3,1624.2C3430.6,1623.6 3446.8,1622.4 3463.1,1622.4C3479.3,1622.4 3495.6,1623.3 3511.8,1623.3C3528.1,1623.3 3544.3,1623.0 3560.6,1622.8" stroke="#3b82f6" stroke-width="2.1" fill="none"/><path d="M635.0,1618.2C651.3,1618.6 667.5,1619.1 683.8,1619.1C700.0,1619.1 716.3,1617.8 732.5,1617.8C748.8,1617.8 765.0,1618.2 781.3,1618.2C797.5,1618.2 813.8,1615.7 830.0,1615.3C846.3,1614.8 862.5,1614.6 878.8,1614.6C895.1,1614.6 911.3,1616.9 927.6,1616.9C943.8,1616.9 960.1,1616.8 976.3,1616.8C992.6,1616.8 1008.8,1618.8 1025.1,1619.0C1041.3,1619.2 1057.6,1619.3 1073.8,1619.3C1090.1,1619.3 1106.3,1616.2 1122.6,1616.2C1138.9,1616.2 1155.1,1616.3 1171.4,1616.3C1187.6,1616.3 1203.9,1615.1 1220.1,1615.1C1236.4,1615.1 1252.6,1615.1 1268.9,1615.1C1285.1,1615.2 1301.4,1618.6 1317.6,1618.6C1333.9,1618.6 1350.1,1618.4 1366.4,1618.4C1382.7,1618.4 1398.9,1618.4 1415.2,1618.4C1431.4,1618.4 1447.7,1618.3 1463.9,1618.1C1480.2,1617.9 1496.4,1614.7 1512.7,1614.7C1528.9,1614.7 1545.2,1615.0 1561.4,1615.3C1577.7,1615.6 1593.9,1616.3 1610.2,1616.5C1626.5,1616.6 1642.7,1616.5 1659.0,1616.7C1675.2,1616.9 1691.5,1619.7 1707.7,1619.7C1724.0,1619.7 1740.2,1619.1 1756.5,1618.6C1772.7,1618.0 1789.0,1616.5 1805.2,1616.5C1821.5,1616.5 1837.7,1616.6 1854.0,1616.6C1870.3,1616.6 1886.5,1614.4 1902.8,1614.4C1919.0,1614.4 1935.3,1615.2 1951.5,1615.9C1967.8,1616.5 1984.0,1618.5 2000.3,1618.5C2016.5,1618.5 2032.8,1617.9 2049.0,1617.9C2065.3,1617.9 2081.5,1619.1 2097.8,1619.1C2114.1,1619.1 2130.3,1618.3 2146.6,1617.5C2162.8,1616.7 2179.1,1614.6 2195.3,1614.6C2211.6,1614.6 2227.8,1615.9 2244.1,1615.9C2260.3,1615.9 2276.6,1615.8 2292.8,1615.8C2309.1,1615.8 2325.3,1616.5 2341.6,1617.2C2357.9,1617.9 2374.1,1619.9 2390.4,1619.9C2406.6,1619.9 2422.9,1618.3 2439.1,1617.9C2455.4,1617.4 2471.6,1617.4 2487.9,1617.2C2504.1,1616.9 2520.4,1616.7 2536.6,1616.2C2552.9,1615.7 2569.1,1614.0 2585.4,1614.0C2601.7,1614.0 2617.9,1616.0 2634.2,1616.6C2650.4,1617.3 2666.7,1617.9 2682.9,1618.0C2699.2,1618.0 2715.4,1618.0 2731.7,1618.1C2747.9,1618.1 2764.2,1619.6 2780.4,1619.6C2796.7,1619.6 2812.9,1617.4 2829.2,1616.7C2845.5,1615.9 2861.7,1615.1 2878.0,1615.1C2894.2,1615.1 2910.5,1616.0 2926.7,1616.0C2943.0,1616.0 2959.2,1615.2 2975.5,1615.2C2991.7,1615.2 3008.0,1617.3 3024.2,1618.0C3040.5,1618.7 3056.7,1619.5 3073.0,1619.5C3089.3,1619.5 3105.5,1617.6 3121.8,1617.6C3138.0,1617.6 3154.3,1617.8 3170.5,1617.8C3186.8,1617.8 3203.0,1616.1 3219.3,1615.5C3235.5,1614.9 3251.8,1614.3 3268.0,1614.3C3284.3,1614.3 3300.5,1617.0 3316.8,1617.1C3333.1,1617.2 3349.3,1617.2 3365.6,1617.3C3381.8,1617.4 3398.1,1618.3 3414.3,1618.7C3430.6,1619.1 3446.8,1619.5 3463.1,1619.5C3479.3,1619.5 3495.6,1616.3 3511.8,1616.1C3528.1,1615.9 3544.3,1615.8 3560.6,1615.8" stroke="#56c8f0" stroke-width="2.1" fill="none"/><path d="M635.0,1613.2C651.3,1612.5 667.5,1611.8 683.8,1611.6C700.0,1611.4 716.3,1611.5 732.5,1611.4C748.8,1611.2 765.0,1607.7 781.3,1607.7C797.5,1607.7 813.8,1608.3 830.0,1609.0C846.3,1609.6 862.5,1611.7 878.8,1611.7C895.1,1611.7 911.3,1611.6 927.6,1611.6C943.8,1611.6 960.1,1614.2 976.3,1614.2C992.6,1614.2 1008.8,1613.4 1025.1,1612.5C1041.3,1611.6 1057.6,1609.0 1073.8,1609.0C1090.1,1609.0 1106.3,1609.8 1122.6,1609.8C1138.9,1609.8 1155.1,1608.4 1171.4,1608.4C1187.6,1608.4 1203.9,1609.4 1220.1,1610.3C1236.4,1611.3 1252.6,1614.0 1268.9,1614.0C1285.1,1614.0 1301.4,1612.4 1317.6,1612.4C1333.9,1612.4 1350.1,1612.5 1366.4,1612.5C1382.7,1612.5 1398.9,1611.6 1415.2,1610.8C1431.4,1609.9 1447.7,1607.4 1463.9,1607.4C1480.2,1607.4 1496.4,1609.3 1512.7,1609.9C1528.9,1610.5 1545.2,1610.6 1561.4,1610.9C1577.7,1611.2 1593.9,1611.3 1610.2,1611.9C1626.5,1612.6 1642.7,1614.7 1659.0,1614.7C1675.2,1614.7 1691.5,1612.3 1707.7,1611.5C1724.0,1610.6 1740.2,1609.7 1756.5,1609.7C1772.7,1609.7 1789.0,1609.7 1805.2,1609.7C1821.5,1609.7 1837.7,1607.8 1854.0,1607.8C1870.3,1607.8 1886.5,1610.4 1902.8,1611.4C1919.0,1612.3 1935.3,1613.5 1951.5,1613.5C1967.8,1613.5 1984.0,1612.2 2000.3,1612.2C2016.5,1612.2 2032.8,1613.2 2049.0,1613.2C2065.3,1613.2 2081.5,1610.7 2097.8,1609.8C2114.1,1608.9 2130.3,1607.8 2146.6,1607.8C2162.8,1607.8 2179.1,1610.3 2195.3,1610.3C2211.6,1610.3 2227.8,1610.1 2244.1,1610.1C2260.3,1610.1 2276.6,1612.1 2292.8,1612.8C2309.1,1613.6 2325.3,1614.4 2341.6,1614.4C2357.9,1614.4 2374.1,1611.1 2390.4,1610.9C2406.6,1610.7 2422.9,1610.8 2439.1,1610.6C2455.4,1610.4 2471.6,1609.4 2487.9,1608.9C2504.1,1608.5 2520.4,1607.9 2536.6,1607.9C2552.9,1607.9 2569.1,1611.9 2585.4,1612.1C2601.7,1612.4 2617.9,1612.5 2634.2,1612.6C2650.4,1612.7 2666.7,1612.7 2682.9,1612.8C2699.2,1612.9 2715.4,1613.3 2731.7,1613.3C2747.9,1613.3 2764.2,1609.0 2780.4,1608.9C2796.7,1608.7 2812.9,1608.7 2829.2,1608.7C2845.5,1608.7 2861.7,1609.9 2878.0,1609.9C2894.2,1609.9 2910.5,1609.8 2926.7,1609.8C2943.0,1609.8 2959.2,1613.8 2975.5,1613.8C2991.7,1613.8 3008.0,1613.7 3024.2,1613.6C3040.5,1613.5 3056.7,1611.0 3073.0,1611.0C3089.3,1611.0 3105.5,1611.1 3121.8,1611.1C3138.0,1611.1 3154.3,1608.0 3170.5,1608.0C3186.8,1608.0 3203.0,1608.2 3219.3,1608.7C3235.5,1609.1 3251.8,1612.3 3268.0,1612.3C3284.3,1612.3 3300.5,1611.9 3316.8,1611.9C3333.1,1611.9 3349.3,1613.7 3365.6,1613.7C3381.8,1613.7 3398.1,1613.4 3414.3,1612.7C3430.6,1612.0 3446.8,1608.6 3463.1,1608.6C3479.3,1608.6 3495.6,1609.5 3511.8,1609.5C3528.1,1609.5 3544.3,1609.3 3560.6,1609.1" stroke="#d9b98a" stroke-width="2.1" fill="none"/><path d="M635.0,1627.1C651.3,1627.0 667.5,1626.8 683.8,1626.7C700.0,1626.6 716.3,1626.5 732.5,1626.5C748.8,1626.4 765.0,1626.4 781.3,1626.2C797.5,1626.0 813.8,1624.6 830.0,1624.6C846.3,1624.6 862.5,1625.0 878.8,1625.3C895.1,1625.5 911.3,1626.0 927.6,1626.1C943.8,1626.1 960.1,1626.1 976.3,1626.2C992.6,1626.2 1008.8,1627.4 1025.1,1627.4C1041.3,1627.4 1057.6,1626.9 1073.8,1626.5C1090.1,1626.2 1106.3,1625.4 1122.6,1625.4C1138.9,1625.4 1155.1,1625.6 1171.4,1625.6C1187.6,1625.6 1203.9,1624.8 1220.1,1624.8C1236.4,1624.8 1252.6,1625.4 1268.9,1625.8C1285.1,1626.2 1301.4,1627.1 1317.6,1627.1C1333.9,1627.1 1350.1,1626.5 1366.4,1626.5C1382.7,1626.5 1398.9,1626.8 1415.2,1626.8C1431.4,1626.8 1447.7,1626.2 1463.9,1625.9C1480.2,1625.5 1496.4,1624.6 1512.7,1624.6C1528.9,1624.6 1545.2,1625.5 1561.4,1625.6C1577.7,1625.7 1593.9,1625.6 1610.2,1625.7C1626.5,1625.8 1642.7,1626.1 1659.0,1626.4C1675.2,1626.7 1691.5,1627.5 1707.7,1627.5C1724.0,1627.5 1740.2,1626.5 1756.5,1626.2C1772.7,1625.9 1789.0,1625.8 1805.2,1625.7C1821.5,1625.6 1837.7,1625.6 1854.0,1625.4C1870.3,1625.2 1886.5,1624.6 1902.8,1624.6C1919.0,1624.6 1935.3,1625.8 1951.5,1626.2C1967.8,1626.5 1984.0,1626.8 2000.3,1626.8C2016.5,1626.8 2032.8,1626.6 2049.0,1626.6C2065.3,1626.6 2081.5,1627.0 2097.8,1627.0C2114.1,1627.0 2130.3,1625.8 2146.6,1625.5C2162.8,1625.1 2179.1,1624.9 2195.3,1624.9C2211.6,1624.9 2227.8,1625.6 2244.1,1625.6C2260.3,1625.6 2276.6,1625.4 2292.8,1625.4C2309.1,1625.4 2325.3,1626.5 2341.6,1626.8C2357.9,1627.1 2374.1,1627.3 2390.4,1627.3C2406.6,1627.3 2422.9,1626.0 2439.1,1626.0C2455.4,1626.0 2471.6,1626.0 2487.9,1626.0C2504.1,1626.0 2520.4,1625.2 2536.6,1625.1C2552.9,1624.9 2569.1,1624.8 2585.4,1624.8C2601.7,1624.8 2617.9,1626.4 2634.2,1626.4C2650.4,1626.4 2666.7,1626.4 2682.9,1626.4C2699.2,1626.5 2715.4,1626.8 2731.7,1626.9C2747.9,1626.9 2764.2,1627.0 2780.4,1627.0C2796.7,1627.0 2812.9,1625.2 2829.2,1625.2C2845.5,1625.2 2861.7,1625.2 2878.0,1625.2C2894.2,1625.3 2910.5,1625.4 2926.7,1625.4C2943.0,1625.4 2959.2,1625.4 2975.5,1625.4C2991.7,1625.5 3008.0,1627.2 3024.2,1627.2C3040.5,1627.2 3056.7,1627.1 3073.0,1626.9C3089.3,1626.7 3105.5,1626.2 3121.8,1626.2C3138.0,1626.1 3154.3,1626.2 3170.5,1626.1C3186.8,1626.1 3203.0,1624.7 3219.3,1624.7C3235.5,1624.7 3251.8,1624.9 3268.0,1625.1C3284.3,1625.4 3300.5,1626.3 3316.8,1626.3C3333.1,1626.3 3349.3,1626.2 3365.6,1626.2C3381.8,1626.2 3398.1,1627.2 3414.3,1627.2C3430.6,1627.2 3446.8,1627.0 3463.1,1626.6C3479.3,1626.3 3495.6,1625.2 3511.8,1625.2C3528.1,1625.2 3544.3,1625.3 3560.6,1625.5" stroke="#f783ac" stroke-width="2.1" fill="none"/><path d="M635.0,1627.1C651.3,1627.1 667.5,1627.1 683.8,1627.1C700.0,1627.1 716.3,1626.3 732.5,1626.2C748.8,1626.1 765.0,1626.0 781.3,1626.0C797.5,1626.0 813.8,1627.3 830.0,1627.3C846.3,1627.3 862.5,1627.2 878.8,1627.2C895.1,1627.2 911.3,1627.8 927.6,1627.8C943.8,1627.8 960.1,1627.8 976.3,1627.8C992.6,1627.8 1008.8,1626.4 1025.1,1626.4C1041.3,1626.4 1057.6,1626.5 1073.8,1626.5C1090.1,1626.5 1106.3,1626.4 1122.6,1626.4C1138.9,1626.4 1155.1,1626.4 1171.4,1626.5C1187.6,1626.6 1203.9,1627.9 1220.1,1627.9C1236.4,1627.9 1252.6,1627.8 1268.9,1627.7C1285.1,1627.6 1301.4,1627.3 1317.6,1627.3C1333.9,1627.2 1350.1,1627.2 1366.4,1627.2C1382.7,1627.1 1398.9,1625.9 1415.2,1625.9C1431.4,1625.9 1447.7,1626.2 1463.9,1626.4C1480.2,1626.6 1496.4,1627.1 1512.7,1627.1C1528.9,1627.1 1545.2,1627.1 1561.4,1627.1C1577.7,1627.1 1593.9,1628.1 1610.2,1628.1C1626.5,1628.1 1642.7,1627.8 1659.0,1627.5C1675.2,1627.2 1691.5,1626.4 1707.7,1626.4C1724.0,1626.4 1740.2,1626.6 1756.5,1626.6C1772.7,1626.6 1789.0,1626.1 1805.2,1626.1C1821.5,1626.1 1837.7,1626.5 1854.0,1626.8C1870.3,1627.1 1886.5,1627.9 1902.8,1627.9C1919.0,1627.9 1935.3,1627.4 1951.5,1627.4C1967.8,1627.4 1984.0,1627.5 2000.3,1627.5C2016.5,1627.5 2032.8,1627.2 2049.0,1627.0C2065.3,1626.7 2081.5,1625.9 2097.8,1625.9C2114.1,1625.9 2130.3,1626.5 2146.6,1626.6C2162.8,1626.8 2179.1,1626.8 2195.3,1626.9C2211.6,1627.0 2227.8,1627.1 2244.1,1627.3C2260.3,1627.5 2276.6,1628.2 2292.8,1628.2C2309.1,1628.2 2325.3,1627.4 2341.6,1627.2C2357.9,1626.9 2374.1,1626.7 2390.4,1626.7C2406.6,1626.6 2422.9,1626.6 2439.1,1626.6C2455.4,1626.5 2471.6,1625.9 2487.9,1625.9C2504.1,1625.9 2520.4,1626.8 2536.6,1627.1C2552.9,1627.4 2569.1,1627.7 2585.4,1627.7C2601.7,1627.7 2617.9,1627.4 2634.2,1627.4C2650.4,1627.4 2666.7,1627.8 2682.9,1627.8C2699.2,1627.8 2715.4,1626.9 2731.7,1626.6C2747.9,1626.3 2764.2,1626.0 2780.4,1626.0C2796.7,1626.0 2812.9,1626.7 2829.2,1626.7C2845.5,1626.7 2861.7,1626.6 2878.0,1626.6C2894.2,1626.6 2910.5,1627.3 2926.7,1627.6C2943.0,1627.8 2959.2,1628.1 2975.5,1628.1C2991.7,1628.1 3008.0,1627.0 3024.2,1627.0C3040.5,1627.0 3056.7,1627.0 3073.0,1626.9C3089.3,1626.9 3105.5,1626.5 3121.8,1626.3C3138.0,1626.2 3154.3,1626.0 3170.5,1626.0C3186.8,1626.0 3203.0,1627.2 3219.3,1627.3C3235.5,1627.4 3251.8,1627.4 3268.0,1627.4C3284.3,1627.5 3300.5,1627.6 3316.8,1627.6C3333.1,1627.7 3349.3,1627.8 3365.6,1627.8C3381.8,1627.8 3398.1,1626.4 3414.3,1626.4C3430.6,1626.3 3446.8,1626.3 3463.1,1626.3C3479.3,1626.3 3495.6,1626.6 3511.8,1626.6C3528.1,1626.6 3544.3,1626.6 3560.6,1626.6" stroke="#2f6fe0" stroke-width="2.1" fill="none"/><path d="M635.0,1626.7C651.3,1626.7 667.5,1626.7 683.8,1626.7C700.0,1626.7 716.3,1626.7 732.5,1626.7C748.8,1626.7 765.0,1626.7 781.3,1626.7C797.5,1626.7 813.8,1573.5 830.0,1573.5C846.3,1573.5 862.5,1574.3 878.8,1576.0C895.1,1577.7 911.3,1626.7 927.6,1626.7C943.8,1626.7 960.1,1626.7 976.3,1626.7C992.6,1626.7 1008.8,1598.0 1025.1,1598.0C1041.3,1598.0 1057.6,1599.7 1073.8,1603.0C1090.1,1606.3 1106.3,1626.7 1122.6,1626.7C1138.9,1626.7 1155.1,1626.7 1171.4,1626.7C1187.6,1626.7 1203.9,1626.7 1220.1,1626.7C1236.4,1626.7 1252.6,1599.1 1268.9,1590.0C1285.1,1580.9 1301.4,1572.0 1317.6,1572.0C1333.9,1572.0 1350.1,1626.7 1366.4,1626.7C1382.7,1626.7 1398.9,1568.0 1415.2,1568.0C1431.4,1568.0 1447.7,1626.7 1463.9,1626.7C1480.2,1626.7 1496.4,1626.7 1512.7,1626.7C1528.9,1626.7 1545.2,1591.0 1561.4,1591.0C1577.7,1591.0 1593.9,1626.7 1610.2,1626.7C1626.5,1626.7 1642.7,1626.7 1659.0,1626.7C1675.2,1626.7 1691.5,1626.7 1707.7,1626.7C1724.0,1626.7 1740.2,1600.6 1756.5,1592.0C1772.7,1583.4 1789.0,1575.0 1805.2,1575.0C1821.5,1575.0 1837.7,1626.7 1854.0,1626.7C1870.3,1626.7 1886.5,1580.0 1902.8,1580.0C1919.0,1580.0 1935.3,1626.7 1951.5,1626.7C1967.8,1626.7 1984.0,1626.7 2000.3,1626.7C2016.5,1626.7 2032.8,1585.5 2049.0,1585.5C2065.3,1585.5 2081.5,1626.7 2097.8,1626.7C2114.1,1626.7 2130.3,1626.7 2146.6,1626.7C2162.8,1626.7 2179.1,1626.7 2195.3,1626.7C2211.6,1626.7 2227.8,1605.8 2244.1,1596.0C2260.3,1586.2 2276.6,1568.0 2292.8,1568.0C2309.1,1568.0 2325.3,1626.7 2341.6,1626.7C2357.9,1626.7 2374.1,1626.7 2390.4,1626.7C2406.6,1626.7 2422.9,1626.7 2439.1,1626.7C2455.4,1626.7 2471.6,1626.7 2487.9,1626.7C2504.1,1626.7 2520.4,1576.0 2536.6,1576.0C2552.9,1576.0 2569.1,1626.7 2585.4,1626.7C2601.7,1626.7 2617.9,1626.7 2634.2,1626.7C2650.4,1626.7 2666.7,1626.7 2682.9,1626.7C2699.2,1626.7 2715.4,1605.5 2731.7,1595.0C2747.9,1584.5 2764.2,1564.0 2780.4,1564.0C2796.7,1564.0 2812.9,1626.7 2829.2,1626.7C2845.5,1626.7 2861.7,1626.7 2878.0,1626.7C2894.2,1626.7 2910.5,1626.7 2926.7,1626.7C2943.0,1626.7 2959.2,1626.7 2975.5,1626.7C2991.7,1626.7 3008.0,1569.0 3024.2,1569.0C3040.5,1569.0 3056.7,1626.7 3073.0,1626.7C3089.3,1626.7 3105.5,1626.7 3121.8,1626.7C3138.0,1626.7 3154.3,1626.7 3170.5,1626.7C3186.8,1626.7 3203.0,1585.0 3219.3,1579.0C3235.5,1573.0 3251.8,1570.0 3268.0,1570.0C3284.3,1570.0 3300.5,1626.7 3316.8,1626.7C3333.1,1626.7 3349.3,1626.7 3365.6,1626.7C3381.8,1626.7 3398.1,1568.0 3414.3,1568.0C3430.6,1568.0 3446.8,1626.7 3463.1,1626.7C3479.3,1626.7 3495.6,1626.7 3511.8,1626.7C3528.1,1626.7 3544.3,1626.7 3560.6,1626.7" stroke="#d6b683" stroke-width="2.1" fill="none"/><path d="M635.0,1614.0C651.3,1614.0 667.5,1614.0 683.8,1614.0C700.0,1614.0 716.3,1465.0 732.5,1465.0C748.8,1465.0 765.0,1614.0 781.3,1614.0C797.5,1614.0 813.8,1614.0 830.0,1614.0C846.3,1614.0 862.5,1614.0 878.8,1614.0C895.1,1614.0 911.3,1614.0 927.6,1614.0C943.8,1614.0 960.1,1614.0 976.3,1614.0C992.6,1614.0 1008.8,1614.0 1025.1,1614.0C1041.3,1614.0 1057.6,1614.0 1073.8,1614.0C1090.1,1614.0 1106.3,1614.0 1122.6,1614.0C1138.9,1614.0 1155.1,1614.0 1171.4,1614.0C1187.6,1614.0 1203.9,1495.0 1220.1,1495.0C1236.4,1495.0 1252.6,1614.0 1268.9,1614.0C1285.1,1614.0 1301.4,1614.0 1317.6,1614.0C1333.9,1614.0 1350.1,1614.0 1366.4,1614.0C1382.7,1614.0 1398.9,1614.0 1415.2,1614.0C1431.4,1614.0 1447.7,1614.0 1463.9,1614.0C1480.2,1614.0 1496.4,1614.0 1512.7,1614.0C1528.9,1614.0 1545.2,1614.0 1561.4,1614.0C1577.7,1614.0 1593.9,1614.0 1610.2,1614.0C1626.5,1614.0 1642.7,1614.0 1659.0,1614.0C1675.2,1614.0 1691.5,1490.0 1707.7,1490.0C1724.0,1490.0 1740.2,1614.0 1756.5,1614.0C1772.7,1614.0 1789.0,1614.0 1805.2,1614.0C1821.5,1614.0 1837.7,1614.0 1854.0,1614.0C1870.3,1614.0 1886.5,1614.0 1902.8,1614.0C1919.0,1614.0 1935.3,1614.0 1951.5,1614.0C1967.8,1614.0 1984.0,1614.0 2000.3,1614.0C2016.5,1614.0 2032.8,1614.0 2049.0,1614.0C2065.3,1614.0 2081.5,1614.0 2097.8,1614.0C2114.1,1614.0 2130.3,1614.0 2146.6,1614.0C2162.8,1614.0 2179.1,1484.0 2195.3,1484.0C2211.6,1484.0 2227.8,1614.0 2244.1,1614.0C2260.3,1614.0 2276.6,1614.0 2292.8,1614.0C2309.1,1614.0 2325.3,1614.0 2341.6,1614.0C2357.9,1614.0 2374.1,1614.0 2390.4,1614.0C2406.6,1614.0 2422.9,1614.0 2439.1,1614.0C2455.4,1614.0 2471.6,1614.0 2487.9,1614.0C2504.1,1614.0 2520.4,1614.0 2536.6,1614.0C2552.9,1614.0 2569.1,1614.0 2585.4,1614.0C2601.7,1614.0 2617.9,1614.0 2634.2,1614.0C2650.4,1614.0 2666.7,1478.5 2682.9,1478.5C2699.2,1478.5 2715.4,1614.0 2731.7,1614.0C2747.9,1614.0 2764.2,1614.0 2780.4,1614.0C2796.7,1614.0 2812.9,1614.0 2829.2,1614.0C2845.5,1614.0 2861.7,1614.0 2878.0,1614.0C2894.2,1614.0 2910.5,1614.0 2926.7,1614.0C2943.0,1614.0 2959.2,1614.0 2975.5,1614.0C2991.7,1614.0 3008.0,1614.0 3024.2,1614.0C3040.5,1614.0 3056.7,1614.0 3073.0,1614.0C3089.3,1614.0 3105.5,1614.0 3121.8,1614.0C3138.0,1614.0 3154.3,1517.6 3170.5,1517.6C3186.8,1517.6 3203.0,1614.0 3219.3,1614.0C3235.5,1614.0 3251.8,1614.0 3268.0,1614.0C3284.3,1614.0 3300.5,1614.0 3316.8,1614.0C3333.1,1614.0 3349.3,1614.0 3365.6,1614.0C3381.8,1614.0 3398.1,1614.0 3414.3,1614.0C3430.6,1614.0 3446.8,1614.0 3463.1,1614.0C3479.3,1614.0 3495.6,1614.0 3511.8,1614.0C3528.1,1614.0 3544.3,1614.0 3560.6,1614.0" stroke="#d6b683" stroke-width="2.2" fill="none"/><path d="M635.0,1613.0C651.3,1613.0 667.5,1613.0 683.8,1613.0C700.0,1613.0 716.3,1470.0 732.5,1470.0C748.8,1470.0 765.0,1613.0 781.3,1613.0C797.5,1613.0 813.8,1613.0 830.0,1613.0C846.3,1613.0 862.5,1613.0 878.8,1613.0C895.1,1613.0 911.3,1613.0 927.6,1613.0C943.8,1613.0 960.1,1613.0 976.3,1613.0C992.6,1613.0 1008.8,1613.0 1025.1,1613.0C1041.3,1613.0 1057.6,1613.0 1073.8,1613.0C1090.1,1613.0 1106.3,1613.0 1122.6,1613.0C1138.9,1613.0 1155.1,1613.0 1171.4,1613.0C1187.6,1613.0 1203.9,1478.5 1220.1,1478.5C1236.4,1478.5 1252.6,1613.0 1268.9,1613.0C1285.1,1613.0 1301.4,1613.0 1317.6,1613.0C1333.9,1613.0 1350.1,1613.0 1366.4,1613.0C1382.7,1613.0 1398.9,1613.0 1415.2,1613.0C1431.4,1613.0 1447.7,1613.0 1463.9,1613.0C1480.2,1613.0 1496.4,1613.0 1512.7,1613.0C1528.9,1613.0 1545.2,1613.0 1561.4,1613.0C1577.7,1613.0 1593.9,1613.0 1610.2,1613.0C1626.5,1613.0 1642.7,1613.0 1659.0,1613.0C1675.2,1613.0 1691.5,1478.5 1707.7,1478.5C1724.0,1478.5 1740.2,1613.0 1756.5,1613.0C1772.7,1613.0 1789.0,1613.0 1805.2,1613.0C1821.5,1613.0 1837.7,1613.0 1854.0,1613.0C1870.3,1613.0 1886.5,1613.0 1902.8,1613.0C1919.0,1613.0 1935.3,1613.0 1951.5,1613.0C1967.8,1613.0 1984.0,1613.0 2000.3,1613.0C2016.5,1613.0 2032.8,1613.0 2049.0,1613.0C2065.3,1613.0 2081.5,1613.0 2097.8,1613.0C2114.1,1613.0 2130.3,1613.0 2146.6,1613.0C2162.8,1613.0 2179.1,1475.0 2195.3,1475.0C2211.6,1475.0 2227.8,1613.0 2244.1,1613.0C2260.3,1613.0 2276.6,1613.0 2292.8,1613.0C2309.1,1613.0 2325.3,1613.0 2341.6,1613.0C2357.9,1613.0 2374.1,1613.0 2390.4,1613.0C2406.6,1613.0 2422.9,1613.0 2439.1,1613.0C2455.4,1613.0 2471.6,1613.0 2487.9,1613.0C2504.1,1613.0 2520.4,1613.0 2536.6,1613.0C2552.9,1613.0 2569.1,1613.0 2585.4,1613.0C2601.7,1613.0 2617.9,1613.0 2634.2,1613.0C2650.4,1613.0 2666.7,1480.0 2682.9,1480.0C2699.2,1480.0 2715.4,1613.0 2731.7,1613.0C2747.9,1613.0 2764.2,1613.0 2780.4,1613.0C2796.7,1613.0 2812.9,1613.0 2829.2,1613.0C2845.5,1613.0 2861.7,1613.0 2878.0,1613.0C2894.2,1613.0 2910.5,1613.0 2926.7,1613.0C2943.0,1613.0 2959.2,1613.0 2975.5,1613.0C2991.7,1613.0 3008.0,1613.0 3024.2,1613.0C3040.5,1613.0 3056.7,1613.0 3073.0,1613.0C3089.3,1613.0 3105.5,1613.0 3121.8,1613.0C3138.0,1613.0 3154.3,1472.0 3170.5,1472.0C3186.8,1472.0 3203.0,1613.0 3219.3,1613.0C3235.5,1613.0 3251.8,1613.0 3268.0,1613.0C3284.3,1613.0 3300.5,1613.0 3316.8,1613.0C3333.1,1613.0 3349.3,1613.0 3365.6,1613.0C3381.8,1613.0 3398.1,1613.0 3414.3,1613.0C3430.6,1613.0 3446.8,1613.0 3463.1,1613.0C3479.3,1613.0 3495.6,1613.0 3511.8,1613.0C3528.1,1613.0 3544.3,1613.0 3560.6,1613.0" stroke="#8a9099" stroke-width="2.2" fill="none"/><path d="M635.0,1537.2C651.3,1535.0 667.5,1532.8 683.8,1532.8C700.0,1532.8 716.3,1534.4 732.5,1534.4C748.8,1534.4 765.0,1520.9 781.3,1520.9C797.5,1520.9 813.8,1525.4 830.0,1527.4C846.3,1529.4 862.5,1532.8 878.8,1532.8C895.1,1532.8 911.3,1528.5 927.6,1528.5C943.8,1528.5 960.1,1531.2 976.3,1531.2C992.6,1531.2 1008.8,1529.0 1025.1,1529.0C1041.3,1529.0 1057.6,1531.2 1073.8,1531.2C1090.1,1531.2 1106.3,1523.0 1122.6,1523.0C1138.9,1523.0 1155.1,1529.6 1171.4,1531.7C1187.6,1533.8 1203.9,1535.5 1220.1,1535.5C1236.4,1535.5 1252.6,1535.1 1268.9,1534.4C1285.1,1533.7 1301.4,1523.0 1317.6,1523.0C1333.9,1523.0 1350.1,1531.7 1366.4,1531.7C1382.7,1531.7 1398.9,1530.0 1415.2,1530.0C1431.4,1530.0 1447.7,1534.4 1463.9,1534.4C1480.2,1534.4 1496.4,1534.4 1512.7,1534.4C1528.9,1534.4 1545.2,1532.4 1561.4,1528.5C1577.7,1524.6 1593.9,1511.1 1610.2,1511.1C1626.5,1511.1 1642.7,1523.0 1659.0,1523.0C1675.2,1523.0 1691.5,1516.5 1707.7,1516.5C1724.0,1516.5 1740.2,1519.1 1756.5,1522.0C1772.7,1524.9 1789.0,1533.9 1805.2,1533.9C1821.5,1533.9 1837.7,1527.4 1854.0,1527.4C1870.3,1527.4 1886.5,1530.0 1902.8,1530.0C1919.0,1530.0 1935.3,1517.6 1951.5,1517.6C1967.8,1517.6 1984.0,1532.8 2000.3,1532.8C2016.5,1532.8 2032.8,1532.8 2049.0,1532.8C2065.3,1532.8 2081.5,1532.8 2097.8,1532.8C2114.1,1532.8 2130.3,1548.0 2146.6,1548.0C2162.8,1548.0 2179.1,1531.8 2195.3,1528.5C2211.6,1525.2 2227.8,1526.9 2244.1,1523.6C2260.3,1520.3 2276.6,1501.8 2292.8,1501.8C2309.1,1501.8 2325.3,1502.5 2341.6,1504.0C2357.9,1505.5 2374.1,1516.5 2390.4,1522.0C2406.6,1527.5 2422.9,1537.2 2439.1,1537.2C2455.4,1537.2 2471.6,1536.0 2487.9,1535.5C2504.1,1535.0 2520.4,1535.1 2536.6,1534.4C2552.9,1533.7 2569.1,1531.2 2585.4,1531.2C2601.7,1531.2 2617.9,1536.6 2634.2,1536.6C2650.4,1536.6 2666.7,1535.0 2682.9,1532.8C2699.2,1530.6 2715.4,1526.5 2731.7,1523.6C2747.9,1520.7 2764.2,1515.4 2780.4,1515.4C2796.7,1515.4 2812.9,1547.5 2829.2,1547.5C2845.5,1547.5 2861.7,1530.0 2878.0,1530.0C2894.2,1530.0 2910.5,1530.0 2926.7,1530.0C2943.0,1530.0 2959.2,1530.4 2975.5,1531.2C2991.7,1532.0 3008.0,1535.5 3024.2,1535.5C3040.5,1535.5 3056.7,1528.0 3073.0,1524.7C3089.3,1521.4 3105.5,1515.4 3121.8,1515.4C3138.0,1515.4 3154.3,1526.5 3170.5,1530.0C3186.8,1533.5 3203.0,1534.8 3219.3,1536.6C3235.5,1538.4 3251.8,1541.0 3268.0,1541.0C3284.3,1541.0 3300.5,1532.8 3316.8,1531.7C3333.1,1530.6 3349.3,1530.0 3365.6,1530.0C3381.8,1530.0 3398.1,1539.9 3414.3,1539.9C3430.6,1539.9 3446.8,1538.2 3463.1,1538.2C3479.3,1538.2 3495.6,1548.0 3511.8,1548.0C3528.1,1548.0 3544.3,1536.9 3560.6,1525.8" stroke="#f2a51c" stroke-width="2.4" fill="none"/><path d="M635.0,1432.3C651.3,1432.1 667.5,1431.9 683.8,1431.2C700.0,1430.5 716.3,1425.2 732.5,1421.5C748.8,1417.8 765.0,1409.0 781.3,1409.0C797.5,1409.0 813.8,1413.3 830.0,1413.3C846.3,1413.3 862.5,1391.6 878.8,1391.6C895.1,1391.6 911.3,1429.4 927.6,1432.3C943.8,1435.2 960.1,1436.7 976.3,1436.7C992.6,1436.7 1008.8,1426.0 1025.1,1421.5C1041.3,1417.0 1057.6,1414.7 1073.8,1409.5C1090.1,1404.3 1106.3,1390.5 1122.6,1390.5C1138.9,1390.5 1155.1,1434.0 1171.4,1434.0C1187.6,1434.0 1203.9,1425.0 1220.1,1420.4C1236.4,1415.8 1252.6,1406.2 1268.9,1406.2C1285.1,1406.2 1301.4,1417.2 1317.6,1420.4C1333.9,1423.6 1350.1,1425.3 1366.4,1425.3C1382.7,1425.3 1398.9,1373.7 1415.2,1373.7C1431.4,1373.7 1447.7,1411.9 1463.9,1424.2C1480.2,1436.5 1496.4,1447.5 1512.7,1447.5C1528.9,1447.5 1545.2,1418.6 1561.4,1407.9C1577.7,1397.2 1593.9,1383.4 1610.2,1383.4C1626.5,1383.4 1642.7,1402.4 1659.0,1402.4C1675.2,1402.4 1691.5,1390.8 1707.7,1388.9C1724.0,1387.0 1740.2,1386.1 1756.5,1386.1C1772.7,1386.1 1789.0,1429.6 1805.2,1429.6C1821.5,1429.6 1837.7,1413.8 1854.0,1407.9C1870.3,1402.0 1886.5,1394.3 1902.8,1394.3C1919.0,1394.3 1935.3,1408.1 1951.5,1416.0C1967.8,1423.9 1984.0,1441.6 2000.3,1441.6C2016.5,1441.6 2032.8,1413.3 2049.0,1413.3C2065.3,1413.3 2081.5,1416.4 2097.8,1422.5C2114.1,1428.6 2130.3,1471.4 2146.6,1471.4C2162.8,1471.4 2179.1,1426.0 2195.3,1413.3C2211.6,1400.6 2227.8,1399.9 2244.1,1394.3C2260.3,1388.7 2276.6,1385.3 2292.8,1379.6C2309.1,1373.9 2325.3,1360.0 2341.6,1360.0C2357.9,1360.0 2374.1,1386.7 2390.4,1399.7C2406.6,1412.7 2422.9,1428.8 2439.1,1437.8C2455.4,1446.8 2471.6,1454.0 2487.9,1454.0C2504.1,1454.0 2520.4,1396.0 2536.6,1396.0C2552.9,1396.0 2569.1,1429.5 2585.4,1435.0C2601.7,1440.5 2617.9,1443.2 2634.2,1443.2C2650.4,1443.2 2666.7,1423.8 2682.9,1415.0C2699.2,1406.2 2715.4,1391.6 2731.7,1390.5C2747.9,1389.4 2764.2,1388.9 2780.4,1388.9C2796.7,1388.9 2812.9,1474.7 2829.2,1474.7C2845.5,1474.7 2861.7,1421.5 2878.0,1421.5C2894.2,1421.5 2910.5,1422.4 2926.7,1424.2C2943.0,1426.0 2959.2,1443.2 2975.5,1443.2C2991.7,1443.2 3008.0,1395.4 3024.2,1395.4C3040.5,1395.4 3056.7,1396.0 3073.0,1396.0C3089.3,1396.0 3105.5,1394.3 3121.8,1394.3C3138.0,1394.3 3154.3,1428.0 3170.5,1428.0C3186.8,1428.0 3203.0,1411.7 3219.3,1411.7C3235.5,1411.7 3251.8,1455.1 3268.0,1455.1C3284.3,1455.1 3300.5,1446.1 3316.8,1443.2C3333.1,1440.3 3349.3,1437.8 3365.6,1437.8C3381.8,1437.8 3398.1,1455.1 3414.3,1455.1C3430.6,1455.1 3446.8,1448.6 3463.1,1448.6C3479.3,1448.6 3495.6,1454.0 3511.8,1454.0C3528.1,1454.0 3544.3,1424.7 3560.6,1395.4" stroke="#8a50e8" stroke-width="2.4" fill="none"/><path d="M635.0,1609.0C651.3,1609.0 667.5,1609.0 683.8,1609.0C700.0,1609.0 716.3,1428.0 732.5,1428.0C748.8,1428.0 765.0,1609.0 781.3,1609.0C797.5,1609.0 813.8,1609.0 830.0,1609.0C846.3,1609.0 862.5,1609.0 878.8,1609.0C895.1,1609.0 911.3,1609.0 927.6,1609.0C943.8,1609.0 960.1,1609.0 976.3,1609.0C992.6,1609.0 1008.8,1609.0 1025.1,1609.0C1041.3,1609.0 1057.6,1609.0 1073.8,1609.0C1090.1,1609.0 1106.3,1609.0 1122.6,1609.0C1138.9,1609.0 1155.1,1609.0 1171.4,1609.0C1187.6,1609.0 1203.9,1435.0 1220.1,1435.0C1236.4,1435.0 1252.6,1609.0 1268.9,1609.0C1285.1,1609.0 1301.4,1609.0 1317.6,1609.0C1333.9,1609.0 1350.1,1609.0 1366.4,1609.0C1382.7,1609.0 1398.9,1609.0 1415.2,1609.0C1431.4,1609.0 1447.7,1609.0 1463.9,1609.0C1480.2,1609.0 1496.4,1609.0 1512.7,1609.0C1528.9,1609.0 1545.2,1609.0 1561.4,1609.0C1577.7,1609.0 1593.9,1609.0 1610.2,1609.0C1626.5,1609.0 1642.7,1609.0 1659.0,1609.0C1675.2,1609.0 1691.5,1404.0 1707.7,1404.0C1724.0,1404.0 1740.2,1609.0 1756.5,1609.0C1772.7,1609.0 1789.0,1609.0 1805.2,1609.0C1821.5,1609.0 1837.7,1609.0 1854.0,1609.0C1870.3,1609.0 1886.5,1609.0 1902.8,1609.0C1919.0,1609.0 1935.3,1609.0 1951.5,1609.0C1967.8,1609.0 1984.0,1609.0 2000.3,1609.0C2016.5,1609.0 2032.8,1609.0 2049.0,1609.0C2065.3,1609.0 2081.5,1609.0 2097.8,1609.0C2114.1,1609.0 2130.3,1609.0 2146.6,1609.0C2162.8,1609.0 2179.1,1420.0 2195.3,1420.0C2211.6,1420.0 2227.8,1609.0 2244.1,1609.0C2260.3,1609.0 2276.6,1609.0 2292.8,1609.0C2309.1,1609.0 2325.3,1609.0 2341.6,1609.0C2357.9,1609.0 2374.1,1609.0 2390.4,1609.0C2406.6,1609.0 2422.9,1609.0 2439.1,1609.0C2455.4,1609.0 2471.6,1609.0 2487.9,1609.0C2504.1,1609.0 2520.4,1609.0 2536.6,1609.0C2552.9,1609.0 2569.1,1609.0 2585.4,1609.0C2601.7,1609.0 2617.9,1609.0 2634.2,1609.0C2650.4,1609.0 2666.7,1421.5 2682.9,1421.5C2699.2,1421.5 2715.4,1609.0 2731.7,1609.0C2747.9,1609.0 2764.2,1609.0 2780.4,1609.0C2796.7,1609.0 2812.9,1609.0 2829.2,1609.0C2845.5,1609.0 2861.7,1609.0 2878.0,1609.0C2894.2,1609.0 2910.5,1609.0 2926.7,1609.0C2943.0,1609.0 2959.2,1609.0 2975.5,1609.0C2991.7,1609.0 3008.0,1609.0 3024.2,1609.0C3040.5,1609.0 3056.7,1609.0 3073.0,1609.0C3089.3,1609.0 3105.5,1609.0 3121.8,1609.0C3138.0,1609.0 3154.3,1428.0 3170.5,1428.0C3186.8,1428.0 3203.0,1609.0 3219.3,1609.0C3235.5,1609.0 3251.8,1609.0 3268.0,1609.0C3284.3,1609.0 3300.5,1609.0 3316.8,1609.0C3333.1,1609.0 3349.3,1609.0 3365.6,1609.0C3381.8,1609.0 3398.1,1609.0 3414.3,1609.0C3430.6,1609.0 3446.8,1609.0 3463.1,1609.0C3479.3,1609.0 3495.6,1609.0 3511.8,1609.0C3528.1,1609.0 3544.3,1609.0 3560.6,1609.0" stroke="#22c7e8" stroke-width="2.5" fill="none"/><path d="M635.0,1344.3C651.3,1344.3 667.5,1344.3 683.8,1344.3C700.0,1344.3 716.3,1352.5 732.5,1352.5C748.8,1352.5 765.0,1325.5 781.3,1322.6C797.5,1319.7 813.8,1318.3 830.0,1318.3C846.3,1318.3 862.5,1337.3 878.8,1337.3C895.1,1337.3 911.3,1311.2 927.6,1311.2C943.8,1311.2 960.1,1357.9 976.3,1357.9C992.6,1357.9 1008.8,1340.0 1025.1,1340.0C1041.3,1340.0 1057.6,1341.6 1073.8,1341.6C1090.1,1341.6 1106.3,1290.0 1122.6,1290.0C1138.9,1290.0 1155.1,1324.9 1171.4,1337.3C1187.6,1349.7 1203.9,1364.4 1220.1,1364.4C1236.4,1364.4 1252.6,1355.2 1268.9,1347.0C1285.1,1338.8 1301.4,1315.5 1317.6,1315.5C1333.9,1315.5 1350.1,1340.0 1366.4,1340.0C1382.7,1340.0 1398.9,1336.2 1415.2,1336.2C1431.4,1336.2 1447.7,1336.2 1463.9,1336.2C1480.2,1336.2 1496.4,1369.9 1512.7,1369.9C1528.9,1369.9 1545.2,1339.6 1561.4,1323.7C1577.7,1307.9 1593.9,1274.8 1610.2,1274.8C1626.5,1274.8 1642.7,1298.2 1659.0,1298.2C1675.2,1298.2 1691.5,1295.6 1707.7,1294.9C1724.0,1294.2 1740.2,1293.8 1756.5,1293.8C1772.7,1293.8 1789.0,1340.0 1805.2,1340.0C1821.5,1340.0 1837.7,1319.3 1854.0,1319.3C1870.3,1319.3 1886.5,1351.9 1902.8,1351.9C1919.0,1351.9 1935.3,1303.6 1951.5,1303.6C1967.8,1303.6 1984.0,1350.9 2000.3,1355.2C2016.5,1359.5 2032.8,1361.7 2049.0,1361.7C2065.3,1361.7 2081.5,1332.9 2097.8,1332.9C2114.1,1332.9 2130.3,1399.7 2146.6,1399.7C2162.8,1399.7 2179.1,1353.8 2195.3,1345.0C2211.6,1336.2 2227.8,1340.6 2244.1,1331.8C2260.3,1323.0 2276.6,1255.8 2292.8,1255.8C2309.1,1255.8 2325.3,1260.3 2341.6,1269.4C2357.9,1278.5 2374.1,1301.7 2390.4,1315.5C2406.6,1329.4 2422.9,1345.3 2439.1,1352.5C2455.4,1359.7 2471.6,1363.3 2487.9,1363.3C2504.1,1363.3 2520.4,1361.3 2536.6,1357.4C2552.9,1353.5 2569.1,1333.5 2585.4,1333.5C2601.7,1333.5 2617.9,1359.0 2634.2,1359.0C2650.4,1359.0 2666.7,1353.6 2682.9,1345.4C2699.2,1337.2 2715.4,1323.8 2731.7,1310.0C2747.9,1296.2 2764.2,1262.8 2780.4,1262.8C2796.7,1262.8 2812.9,1395.4 2829.2,1395.4C2845.5,1395.4 2861.7,1344.3 2878.0,1344.3C2894.2,1344.3 2910.5,1344.7 2926.7,1345.4C2943.0,1346.1 2959.2,1348.1 2975.5,1350.8C2991.7,1353.5 3008.0,1361.7 3024.2,1361.7C3040.5,1361.7 3056.7,1332.5 3073.0,1318.3C3089.3,1304.1 3105.5,1276.4 3121.8,1276.4C3138.0,1276.4 3154.3,1307.8 3170.5,1323.7C3186.8,1339.5 3203.0,1369.0 3219.3,1371.5C3235.5,1374.0 3251.8,1375.3 3268.0,1375.3C3284.3,1375.3 3300.5,1352.8 3316.8,1352.0C3333.1,1351.2 3349.3,1350.8 3365.6,1350.8C3381.8,1350.8 3398.1,1374.2 3414.3,1374.2C3430.6,1374.2 3446.8,1363.3 3463.1,1363.3C3479.3,1363.3 3495.6,1377.0 3511.8,1380.7C3528.1,1384.4 3544.3,1385.3 3560.6,1386.2" stroke="#2ecc98" stroke-width="2.4" fill="none"/><path d="M635.0,1628.7C651.3,1628.7 667.5,1628.7 683.8,1628.7C700.0,1628.7 716.3,1628.7 732.5,1628.7C748.8,1628.7 765.0,1628.7 781.3,1628.7C797.5,1628.7 813.8,1016.0 830.0,1016.0C846.3,1016.0 862.5,1628.7 878.8,1628.7C895.1,1628.7 911.3,1628.7 927.6,1628.7C943.8,1628.7 960.1,1628.7 976.3,1628.7C992.6,1628.7 1008.8,1628.7 1025.1,1628.7C1041.3,1628.7 1057.6,1628.7 1073.8,1628.7C1090.1,1628.7 1106.3,1628.7 1122.6,1628.7C1138.9,1628.7 1155.1,1628.7 1171.4,1628.7C1187.6,1628.7 1203.9,1628.7 1220.1,1628.7C1236.4,1628.7 1252.6,1628.7 1268.9,1628.7C1285.1,1628.7 1301.4,1009.0 1317.6,1009.0C1333.9,1009.0 1350.1,1628.7 1366.4,1628.7C1382.7,1628.7 1398.9,1628.7 1415.2,1628.7C1431.4,1628.7 1447.7,1628.7 1463.9,1628.7C1480.2,1628.7 1496.4,1628.7 1512.7,1628.7C1528.9,1628.7 1545.2,1628.7 1561.4,1628.7C1577.7,1628.7 1593.9,1628.7 1610.2,1628.7C1626.5,1628.7 1642.7,1628.7 1659.0,1628.7C1675.2,1628.7 1691.5,1628.7 1707.7,1628.7C1724.0,1628.7 1740.2,1628.7 1756.5,1628.7C1772.7,1628.7 1789.0,1003.0 1805.2,1003.0C1821.5,1003.0 1837.7,1628.7 1854.0,1628.7C1870.3,1628.7 1886.5,1628.7 1902.8,1628.7C1919.0,1628.7 1935.3,1628.7 1951.5,1628.7C1967.8,1628.7 1984.0,1628.7 2000.3,1628.7C2016.5,1628.7 2032.8,1628.7 2049.0,1628.7C2065.3,1628.7 2081.5,1628.7 2097.8,1628.7C2114.1,1628.7 2130.3,1628.7 2146.6,1628.7C2162.8,1628.7 2179.1,1628.7 2195.3,1628.7C2211.6,1628.7 2227.8,1628.7 2244.1,1628.7C2260.3,1628.7 2276.6,953.0 2292.8,953.0C2309.1,953.0 2325.3,1628.7 2341.6,1628.7C2357.9,1628.7 2374.1,1628.7 2390.4,1628.7C2406.6,1628.7 2422.9,1628.7 2439.1,1628.7C2455.4,1628.7 2471.6,1628.7 2487.9,1628.7C2504.1,1628.7 2520.4,1628.7 2536.6,1628.7C2552.9,1628.7 2569.1,1628.7 2585.4,1628.7C2601.7,1628.7 2617.9,1628.7 2634.2,1628.7C2650.4,1628.7 2666.7,1628.7 2682.9,1628.7C2699.2,1628.7 2715.4,1628.7 2731.7,1628.7C2747.9,1628.7 2764.2,981.0 2780.4,981.0C2796.7,981.0 2812.9,1628.7 2829.2,1628.7C2845.5,1628.7 2861.7,1628.7 2878.0,1628.7C2894.2,1628.7 2910.5,1628.7 2926.7,1628.7C2943.0,1628.7 2959.2,1628.7 2975.5,1628.7C2991.7,1628.7 3008.0,1628.7 3024.2,1628.7C3040.5,1628.7 3056.7,1628.7 3073.0,1628.7C3089.3,1628.7 3105.5,1628.7 3121.8,1628.7C3138.0,1628.7 3154.3,1628.7 3170.5,1628.7C3186.8,1628.7 3203.0,1628.7 3219.3,1628.7C3235.5,1628.7 3251.8,992.0 3268.0,992.0C3284.3,992.0 3300.5,1628.7 3316.8,1628.7C3333.1,1628.7 3349.3,1628.7 3365.6,1628.7C3381.8,1628.7 3398.1,1628.7 3414.3,1628.7C3430.6,1628.7 3446.8,1628.7 3463.1,1628.7C3479.3,1628.7 3495.6,1628.7 3511.8,1628.7C3528.1,1628.7 3544.3,1628.7 3560.6,1628.7" stroke="#2ecc98" stroke-width="2.2" fill="none"/></svg>
<div class="t m" style="left:555.9px;top:872.0px;font:400 24.5px/24.5px 'Liberation Mono', monospace;color:#7d7f84;">1.8M</div>
<div class="t m" style="left:555.9px;top:1053.1px;font:400 24.5px/24.5px 'Liberation Mono', monospace;color:#7d7f84;">1.4M</div>
<div class="t m" style="left:556.0px;top:1242.0px;font:400 24.5px/24.5px 'Liberation Mono', monospace;color:#7d7f84;">900K</div>
<div class="t m" style="left:556.5px;top:1431.4px;font:400 24.5px/24.5px 'Liberation Mono', monospace;color:#7d7f84;">450K</div>
<div class="t m" style="left:600.3px;top:1617.7px;font:400 24.5px/24.5px 'Liberation Mono', monospace;color:#7d7f84;">0</div>
<div class="t m" style="left:535.7px;top:1646.0px;font:400 24.1px/24.1px 'Liberation Mono', monospace;color:#7d7f84;">Aug 4 3:30:00 PM</div>
<div class="t m" style="left:1002.0px;top:1646.0px;font:400 24.1px/24.1px 'Liberation Mono', monospace;color:#7d7f84;">3:39:00 PM</div>
<div class="t m" style="left:1392.1px;top:1646.0px;font:400 24.1px/24.1px 'Liberation Mono', monospace;color:#7d7f84;">3:47:00 PM</div>
<div class="t m" style="left:1782.2px;top:1646.0px;font:400 24.1px/24.1px 'Liberation Mono', monospace;color:#7d7f84;">3:55:00 PM</div>
<div class="t m" style="left:2172.6px;top:1646.0px;font:400 24.1px/24.1px 'Liberation Mono', monospace;color:#7d7f84;">4:03:00 PM</div>
<div class="t m" style="left:2562.6px;top:1646.0px;font:400 24.1px/24.1px 'Liberation Mono', monospace;color:#7d7f84;">4:11:00 PM</div>
<div class="t m" style="left:2952.7px;top:1646.0px;font:400 24.1px/24.1px 'Liberation Mono', monospace;color:#7d7f84;">4:19:00 PM</div>
<div class="t m" style="left:3417.2px;top:1646.0px;font:400 24.1px/24.1px 'Liberation Mono', monospace;color:#7d7f84;">4:30:00 PM</div>
<div class="b" style="left:546px;top:1710px;width:26px;height:2.5px;background:#2ecc98;"></div>
<div class="b" style="left:802px;top:1710px;width:26px;height:2.5px;background:#8a52e6;"></div>
<div class="b" style="left:956px;top:1710px;width:26px;height:2.5px;background:#d6b683;"></div>
<div class="b" style="left:1081px;top:1710px;width:26px;height:2.5px;background:#3b82f6;"></div>
<div class="t m" style="left:577.8px;top:1699.0px;font:400 24.8px/24.8px 'Liberation Mono', monospace;color:#2ecc98;">load-generator</div>
<div class="t m" style="left:835.3px;top:1699.0px;font:400 24.8px/24.8px 'Liberation Mono', monospace;color:#8a52e6;">payment</div>
<div class="t m" style="left:990.3px;top:1699.0px;font:400 24.8px/24.8px 'Liberation Mono', monospace;color:#d6b683;">flagd</div>
<div class="t m" style="left:1116.0px;top:1699.0px;font:400 24.8px/24.8px 'Liberation Mono', monospace;color:#3b82f6;">cart</div>
<div class="t m" style="left:1191.0px;top:1699.0px;font:400 24.8px/24.8px 'Liberation Mono', monospace;color:#8d9bb0;text-decoration:underline;text-underline-offset:3px;">+12 more</div>
<div class="b" style="left:534px;top:1779px;width:3041px;height:2px;background:#2c2e33;"></div>
<svg class="b" style="left:568px;top:1814px;" width="37" height="30" viewBox="0 0 37 30" fill="none"><rect x="2.5" y="2.5" width="32" height="25" rx="3" stroke="#b3b5b9" stroke-width="2.3"/><path d="M8.5 9.5h2.5M14 9.5h14M8.5 15h2.5M14 15h14M8.5 20.5h2.5M14 20.5h14" stroke="#b3b5b9" stroke-width="2.2"/></svg>
<div class="t m" style="left:627.9px;top:1817.7px;font:400 28.7px/28.7px 'Liberation Mono', monospace;color:#d0d0d2;">Sample Matched Events</div>
<svg class="b" style="left:3508px;top:1818px;" width="27" height="18" viewBox="0 0 27 18" fill="none"><path d="M3 14 L13.5 4 L24 14" stroke="#c4c4c6" stroke-width="2.3"/></svg>
<div class="t" style="left:615.2px;top:1897.2px;font:700 26.45px/26.45px 'Liberation Mono', monospace;color:#ffffff;">Timestamp (Local)</div>
<div class="t" style="left:989.4px;top:1897.2px;font:700 26.45px/26.45px 'Liberation Mono', monospace;color:#ffffff;">service</div>
<div class="t" style="left:1338.1px;top:1897.2px;font:700 26.45px/26.45px 'Liberation Mono', monospace;color:#ffffff;">level</div>
<div class="t" style="left:1593.7px;top:1897.2px;font:700 26.45px/26.45px 'Liberation Mono', monospace;color:#ffffff;">duration</div>
<div class="t" style="left:1947.1px;top:1897.2px;font:700 26.45px/26.45px 'Liberation Mono', monospace;color:#ffffff;">SpanName</div>
<svg class="b" style="left:960.7px;top:1893px;" width="8.0" height="27" viewBox="0 0 8.0 27" fill="none"><circle cx="4" cy="4" r="2.2" fill="#8a8c91"/><circle cx="4" cy="13" r="2.2" fill="#8a8c91"/><circle cx="4" cy="22" r="2.2" fill="#8a8c91"/></svg>
<svg class="b" style="left:1313px;top:1893px;" width="8" height="27" viewBox="0 0 8 27" fill="none"><circle cx="4" cy="4" r="2.2" fill="#8a8c91"/><circle cx="4" cy="13" r="2.2" fill="#8a8c91"/><circle cx="4" cy="22" r="2.2" fill="#8a8c91"/></svg>
<svg class="b" style="left:1566px;top:1893px;" width="8" height="27" viewBox="0 0 8 27" fill="none"><circle cx="4" cy="4" r="2.2" fill="#8a8c91"/><circle cx="4" cy="13" r="2.2" fill="#8a8c91"/><circle cx="4" cy="22" r="2.2" fill="#8a8c91"/></svg>
<svg class="b" style="left:1917px;top:1893px;" width="8" height="27" viewBox="0 0 8 27" fill="none"><circle cx="4" cy="4" r="2.2" fill="#8a8c91"/><circle cx="4" cy="13" r="2.2" fill="#8a8c91"/><circle cx="4" cy="22" r="2.2" fill="#8a8c91"/></svg>
<svg class="b" style="left:3437px;top:1895px;" width="30" height="27" viewBox="0 0 30 27" fill="none"><path d="M2.5 4.5 H27 M2.5 13 H22 C29 13 29 22.5 22 22.5 H16 M2.5 21.5 H9.5 M19 19 L15.5 22.5 L19 26" stroke="#d8d8da" stroke-width="2.3"/></svg>
<svg class="b" style="left:3484px;top:1890px;" width="40" height="35" viewBox="0 0 40 35" fill="none"><path d="M20 2 V25 M11.5 17 L20 25.5 L28.5 17" stroke="#d8d8da" stroke-width="2.4"/><path d="M3.5 20.5 V28.5 C3.5 31 5 32.5 7.5 32.5 H32.5 C35 32.5 36.5 31 36.5 28.5 V20.5" stroke="#d8d8da" stroke-width="2.4"/></svg>
<div class="b" style="left:508px;top:272px;width:772px;height:102px;border:10px solid #fbbc05;box-shadow:2px 5px 6px rgba(0,0,0,.65), inset 2px 5px 6px rgba(0,0,0,.55);"></div>
<div class="b" style="left:506px;top:446px;width:1024px;height:131px;border:10px solid #fbbc05;box-shadow:2px 5px 6px rgba(0,0,0,.65), inset 2px 5px 6px rgba(0,0,0,.55);"></div>
<div class="b" style="left:2738px;top:460px;width:851px;height:117px;border:10px solid #fbbc05;box-shadow:2px 5px 6px rgba(0,0,0,.65), inset 2px 5px 6px rgba(0,0,0,.55);"></div>
<div class="b" style="left:3222px;top:362px;width:368px;height:109px;border:10px solid #fbbc05;box-shadow:2px 5px 6px rgba(0,0,0,.65), inset 2px 5px 6px rgba(0,0,0,.55);"></div>
<div class="b" style="left:0px;top:0px;width:2px;height:1930px;background:#47494e;"></div>
<div class="b" style="left:3598px;top:0px;width:2px;height:1930px;background:#47494e;"></div>
<div class="b" style="left:0px;top:1928px;width:3600px;height:2px;background:#47494e;"></div>
</div>
<div class="b" style="left:0;top:1890px;width:3600px;height:40px;border:2px solid #47494e;border-top:none;border-radius:0 0 22px 22px;"></div>
</body></html>
